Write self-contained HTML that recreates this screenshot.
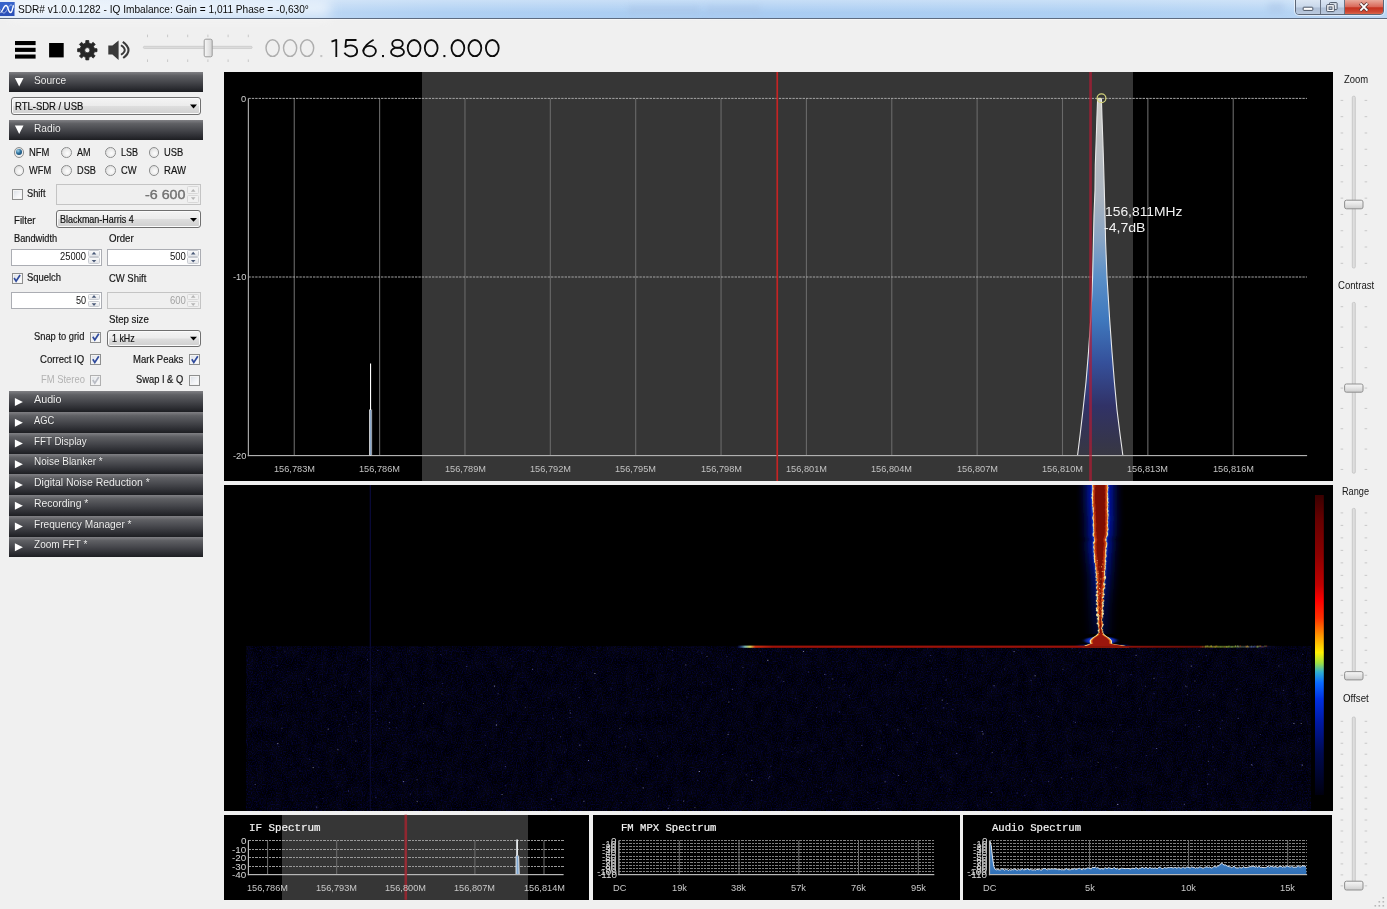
<!DOCTYPE html>
<html><head><meta charset="utf-8"><title>SDR#</title>
<style>
html,body{margin:0;padding:0;}
body{width:1387px;height:909px;overflow:hidden;position:relative;background:#f0f0f0;font-family:"Liberation Sans",sans-serif;}
.t{position:absolute;white-space:pre;transform-origin:0 0;font-family:"Liberation Sans",sans-serif;}
.t.m{font-family:"Liberation Mono",monospace;font-weight:normal;-webkit-text-stroke:0.22px currentColor;}
svg{position:absolute;left:0;top:0;overflow:visible;}
.hdr{position:absolute;left:9px;width:194px;background:linear-gradient(to bottom,#808084 0%,#5f6064 18%,#46474c 50%,#2c2d32 82%,#1d1e22 100%);}
.num{position:absolute;box-sizing:border-box;border:1px solid #abadb3;background:#fff;}
.num.dis{background:#efefef;border-color:#c4c4c4;}
.combo{position:absolute;box-sizing:border-box;border:1px solid #707070;border-radius:3px;background:linear-gradient(to bottom,#f4f4f4 0%,#ececec 48%,#dedede 52%,#cfcfcf 100%);box-shadow:inset 0 0 0 1px #fbfbfb;}
.cb{position:absolute;box-sizing:border-box;border:1px solid #8e8f8f;background:linear-gradient(135deg,#d8dde4 0%,#f4f5f7 60%,#fff 100%);box-shadow:inset 0 0 0 1px #f4f4f4;}
.rb{position:absolute;box-sizing:border-box;border:1px solid #8e8f8f;border-radius:50%;background:radial-gradient(circle at 60% 60%,#fdfdfd 0%,#e9e9e9 55%,#c9c9c9 100%);}

.t.k{-webkit-text-stroke:0.18px currentColor;}

</style></head>
<body>
<div class="" style="position:absolute;left:0.00px;top:0.00px;width:1387.00px;height:18.00px;background:linear-gradient(to right,#dde9f8 0%,#cfe1f6 8%,#bcd7f4 22%,#afd0f3 32%,#a9ccf2 55%,#aed0f3 80%,#bbd7f5 100%);"></div>
<div class="" style="position:absolute;left:0.00px;top:0.00px;width:1387.00px;height:18.00px;background:linear-gradient(to bottom,rgba(255,255,255,.35) 0%,rgba(255,255,255,0) 70%);"></div>
<div class="" style="position:absolute;left:10.00px;top:1.00px;width:320.00px;height:16.00px;background:#fff;filter:blur(6px);opacity:.62;"></div>
<div class="" style="position:absolute;left:0.00px;top:17.60px;width:1387.00px;height:1.20px;background:#5d6b80;"></div>
<div class="" style="position:absolute;left:0.00px;top:18.80px;width:1387.00px;height:1.20px;background:#f7f7f7;"></div>
<svg width="16" height="18" viewBox="0 0 16 18"><rect x="0" y="2" width="14.5" height="14" fill="#2b50b8"/><rect x="0" y="2" width="14.5" height="7" fill="#3f6fd6" opacity=".6"/><path d="M0.5 12.5 C2.5 12.5 3.5 5.5 6 5.5 S 8 12.5 10.5 12.5 S 12 6 14 5.5" stroke="#fff" stroke-width="1.3" fill="none"/><path d="M0.5 9.5 C3 14.5 5 14 7.5 9 S 11.5 3.5 14 8" stroke="#cfe0ff" stroke-width="0.9" fill="none" opacity=".8"/></svg>
<span class="t " style="left:18.30px;top:3.00px;font-size:10.6px;line-height:12px;color:#0a0a0a;transform:scaleX(0.9555);">SDR# v1.0.0.1282 - IQ Imbalance: Gain = 1,011 Phase = -0,630°</span>
<div class="" style="position:absolute;left:628.00px;top:6.00px;width:72.00px;height:8.00px;background:#a9c4e6;filter:blur(3px);opacity:.55;"></div>
<div class="" style="position:absolute;left:706.00px;top:6.00px;width:54.00px;height:8.00px;background:#a9c4e6;filter:blur(3px);opacity:.5;"></div>
<div class="" style="position:absolute;left:1268.00px;top:3.00px;width:16.00px;height:10.00px;background:#a9c4e6;filter:blur(3px);opacity:.5;"></div>
<div style="position:absolute;left:1295px;top:-1px;width:88.5px;height:15.5px;box-sizing:border-box;border:1px solid #5b6676;border-radius:0 0 4px 4px;overflow:hidden;box-shadow:0 0 0 1px rgba(255,255,255,.55);"><div style="position:absolute;left:0;top:0;width:23.5px;height:15px;background:linear-gradient(to bottom,#dbe6f3 0%,#c8d7ea 48%,#aebfd6 52%,#bccbdf 100%);border-right:1px solid #6a7586;"></div><div style="position:absolute;left:24.5px;top:0;width:23.5px;height:15px;background:linear-gradient(to bottom,#dbe6f3 0%,#c8d7ea 48%,#aebfd6 52%,#bccbdf 100%);border-right:1px solid #6a7586;"></div><div style="position:absolute;left:49px;top:0;width:40px;height:15px;background:linear-gradient(to bottom,#e9a99b 0%,#d9695a 45%,#c5321f 52%,#cf4a35 80%,#dd7a5c 100%);"></div></div>
<svg width="1387" height="20" viewBox="0 0 1387 20"><rect x="1303.2" y="7.2" width="9.6" height="3.2" rx=".6" fill="#fff" stroke="#4b5565" stroke-width="1"/><rect x="1329.5" y="2.6" width="7.6" height="7" rx=".8" fill="#dfe7f1" stroke="#4b5565" stroke-width="1"/><rect x="1326.7" y="4.6" width="7.6" height="7" rx=".8" fill="#fff" stroke="#4b5565" stroke-width="1"/><rect x="1329" y="6.9" width="3" height="2.6" fill="#b9c6d8" stroke="#4b5565" stroke-width=".9"/><path d="M1360.2 3.2 L1367.6 10.8 M1367.6 3.2 L1360.2 10.8" stroke="#5a3434" stroke-width="3.4" stroke-linecap="butt"/><path d="M1360.4 3.4 L1367.4 10.6 M1367.4 3.4 L1360.4 10.6" stroke="#fff" stroke-width="1.9" stroke-linecap="butt"/></svg>
<svg width="1387" height="70" viewBox="0 0 1387 70">
<rect x="15" y="41.0" width="20.6" height="4.1" fill="#000"/>
<rect x="15" y="47.8" width="20.6" height="4.1" fill="#000"/>
<rect x="15" y="54.5" width="20.6" height="4.1" fill="#000"/>
<rect x="49.1" y="43" width="14.6" height="14.4" fill="#000"/>
<path d="M94.42 48.61 L96.99 48.74 L96.99 51.66 L94.42 51.79 L93.46 54.11 L95.19 56.02 L93.12 58.09 L91.21 56.36 L88.89 57.32 L88.76 59.89 L85.84 59.89 L85.71 57.32 L83.39 56.36 L81.48 58.09 L79.41 56.02 L81.14 54.11 L80.18 51.79 L77.61 51.66 L77.61 48.74 L80.18 48.61 L81.14 46.29 L79.41 44.38 L81.48 42.31 L83.39 44.04 L85.71 43.08 L85.84 40.51 L88.76 40.51 L88.89 43.08 L91.21 44.04 L93.12 42.31 L95.19 44.38 L93.46 46.29 Z M89.90 50.20 A2.6 2.6 0 1 0 84.70 50.20 A2.6 2.6 0 1 0 89.90 50.20 Z" fill="#262626" fill-rule="evenodd" stroke="#262626" stroke-width="0.8" stroke-linejoin="round"/>
<path d="M108.3 45.6 L112.4 45.6 L118.6 40.4 L118.6 60 L112.4 54.6 L108.3 54.6 Z" fill="#3a3a3a"/>
<path d="M121 45.2 Q128.6 50 121 54.8" stroke="#3a3a3a" stroke-width="1.9" fill="none"/>
<path d="M122.8 41.9 Q134 50 123.2 58" stroke="#3a3a3a" stroke-width="2.1" fill="none"/>
<rect x="143.4" y="46.3" width="108.8" height="2.2" rx="1" fill="#dcdcdc" stroke="#c2c2c2" stroke-width=".6"/>
<rect x="147.0" y="34.6" width="1" height="2.6" fill="#c9c9c9"/>
<rect x="147.0" y="59.4" width="1" height="2.6" fill="#c9c9c9"/>
<rect x="167.1" y="34.6" width="1" height="2.6" fill="#c9c9c9"/>
<rect x="167.1" y="59.4" width="1" height="2.6" fill="#c9c9c9"/>
<rect x="187.2" y="34.6" width="1" height="2.6" fill="#c9c9c9"/>
<rect x="187.2" y="59.4" width="1" height="2.6" fill="#c9c9c9"/>
<rect x="207.4" y="34.6" width="1" height="2.6" fill="#c9c9c9"/>
<rect x="207.4" y="59.4" width="1" height="2.6" fill="#c9c9c9"/>
<rect x="227.6" y="34.6" width="1" height="2.6" fill="#c9c9c9"/>
<rect x="227.6" y="59.4" width="1" height="2.6" fill="#c9c9c9"/>
<rect x="247.8" y="34.6" width="1" height="2.6" fill="#c9c9c9"/>
<rect x="247.8" y="59.4" width="1" height="2.6" fill="#c9c9c9"/>
<defs><linearGradient id="thv" x1="0" x2="0" y1="0" y2="1"><stop offset="0" stop-color="#f7f7f7"/><stop offset=".5" stop-color="#e4e4e4"/><stop offset="1" stop-color="#cdcdcd"/></linearGradient><linearGradient id="thh" x1="0" x2="1" y1="0" y2="0"><stop offset="0" stop-color="#f7f7f7"/><stop offset=".5" stop-color="#e6e6e6"/><stop offset="1" stop-color="#d2d2d2"/></linearGradient></defs>
<rect x="204.2" y="39.2" width="8" height="17.6" rx="1.6" fill="url(#thh)" stroke="#9a9a9a" stroke-width="1"/>
</svg>
<svg width="1387" height="70" viewBox="0 0 1387 70">
<ellipse cx="272.60" cy="48.10" rx="6.58" ry="8.28" stroke="#aeaeae" stroke-width="1.45" fill="none" stroke-linecap="butt" stroke-linejoin="round"/>
<ellipse cx="290.10" cy="48.10" rx="6.58" ry="8.28" stroke="#aeaeae" stroke-width="1.45" fill="none" stroke-linecap="butt" stroke-linejoin="round"/>
<ellipse cx="307.10" cy="48.10" rx="6.58" ry="8.28" stroke="#aeaeae" stroke-width="1.45" fill="none" stroke-linecap="butt" stroke-linejoin="round"/>
<rect x="320.30" y="55.00" width="2.0" height="2.1" fill="#c4c4c4"/>
<path d="M331.50 41.70 L336.30 39.90 L336.30 57.10" stroke="#0c0c0c" stroke-width="1.8" fill="none" stroke-linecap="butt" stroke-linejoin="round"/>
<path d="M356.50 40.00 L346.10 40.00 L345.40 47.10 C348.00 45.40 351.50 45.10 354.10 46.30 C358.10 48.30 358.10 53.70 354.50 55.50 C351.00 57.10 346.10 56.30 344.40 52.70" stroke="#0c0c0c" stroke-width="1.8" fill="none" stroke-linecap="butt" stroke-linejoin="round"/>
<path d="M373.60 39.70 C368.60 42.30 363.60 47.10 363.30 51.30" stroke="#0c0c0c" stroke-width="1.8" fill="none" stroke-linecap="butt" stroke-linejoin="round"/><ellipse cx="369.60" cy="51.10" rx="6.30" ry="5.30" stroke="#0c0c0c" stroke-width="1.8" fill="none" stroke-linecap="butt" stroke-linejoin="round"/>
<rect x="382.00" y="55.00" width="2.0" height="2.1" fill="#0c0c0c"/>
<ellipse cx="397.50" cy="43.80" rx="5.3" ry="4.0" stroke="#0c0c0c" stroke-width="1.8" fill="none" stroke-linecap="butt" stroke-linejoin="round"/><ellipse cx="397.50" cy="52.00" rx="6.5" ry="4.4" stroke="#0c0c0c" stroke-width="1.8" fill="none" stroke-linecap="butt" stroke-linejoin="round"/>
<ellipse cx="414.10" cy="48.10" rx="6.40" ry="8.10" stroke="#0c0c0c" stroke-width="1.8" fill="none" stroke-linecap="butt" stroke-linejoin="round"/>
<ellipse cx="431.20" cy="48.10" rx="6.40" ry="8.10" stroke="#0c0c0c" stroke-width="1.8" fill="none" stroke-linecap="butt" stroke-linejoin="round"/>
<rect x="443.40" y="55.00" width="2.0" height="2.1" fill="#0c0c0c"/>
<ellipse cx="457.90" cy="48.10" rx="6.40" ry="8.10" stroke="#0c0c0c" stroke-width="1.8" fill="none" stroke-linecap="butt" stroke-linejoin="round"/>
<ellipse cx="474.90" cy="48.10" rx="6.40" ry="8.10" stroke="#0c0c0c" stroke-width="1.8" fill="none" stroke-linecap="butt" stroke-linejoin="round"/>
<ellipse cx="492.30" cy="48.10" rx="6.40" ry="8.10" stroke="#0c0c0c" stroke-width="1.8" fill="none" stroke-linecap="butt" stroke-linejoin="round"/>
</svg>
<div class="hdr" style="position:absolute;left:9.00px;top:72.20px;width:194.00px;height:20.20px;"></div>
<svg width="210" height="600"><path d="M14.9 78.00 L23.5 78.00 L19.2 86.40 Z" fill="#fff"/></svg>
<span class="t " style="left:33.70px;top:74.00px;font-size:10.6px;line-height:12px;color:#f2f2f2;transform:scaleX(0.9613);text-shadow:0 0 1px rgba(0,0,0,.6);">Source</span>
<div class="hdr" style="position:absolute;left:9.00px;top:119.80px;width:194.00px;height:20.20px;"></div>
<svg width="210" height="600"><path d="M14.9 125.60 L23.5 125.60 L19.2 134.00 Z" fill="#fff"/></svg>
<span class="t " style="left:33.70px;top:122.00px;font-size:10.6px;line-height:12px;color:#f2f2f2;transform:scaleX(0.9596);text-shadow:0 0 1px rgba(0,0,0,.6);">Radio</span>
<div class="combo" style="position:absolute;left:11.20px;top:97.20px;width:189.70px;height:17.60px;"></div>
<span class="t k" style="left:14.90px;top:101.00px;font-size:10.3px;line-height:11px;color:#101010;transform:scaleX(0.9203);">RTL-SDR / USB</span>
<svg width="210" height="600"><path d="M190.00 104.60 L197.00 104.60 L193.50 108.40 Z" fill="#000"/></svg>
<div class="rb" style="position:absolute;left:13.50px;top:146.90px;width:10.80px;height:10.80px;"></div>
<div class="" style="position:absolute;left:16.00px;top:149.40px;width:5.80px;height:5.80px;border-radius:50%;background:radial-gradient(circle at 35% 30%,#9fd3ea 0%,#2b6f9c 45%,#123a5e 100%);"></div>
<span class="t k" style="left:28.80px;top:147.00px;font-size:10.2px;line-height:11px;color:#151515;transform:scaleX(0.9238);">NFM</span>
<div class="rb" style="position:absolute;left:60.90px;top:146.90px;width:10.80px;height:10.80px;"></div>
<span class="t k" style="left:76.50px;top:147.00px;font-size:10.2px;line-height:11px;color:#151515;transform:scaleX(0.8889);">AM</span>
<div class="rb" style="position:absolute;left:105.10px;top:146.90px;width:10.80px;height:10.80px;"></div>
<span class="t k" style="left:120.70px;top:147.00px;font-size:10.2px;line-height:11px;color:#151515;transform:scaleX(0.8870);">LSB</span>
<div class="rb" style="position:absolute;left:148.70px;top:146.90px;width:10.80px;height:10.80px;"></div>
<span class="t k" style="left:164.00px;top:147.00px;font-size:10.2px;line-height:11px;color:#151515;transform:scaleX(0.9160);">USB</span>
<div class="rb" style="position:absolute;left:13.50px;top:164.80px;width:10.80px;height:10.80px;"></div>
<span class="t k" style="left:28.80px;top:165.00px;font-size:10.2px;line-height:11px;color:#151515;transform:scaleX(0.9107);">WFM</span>
<div class="rb" style="position:absolute;left:60.90px;top:164.80px;width:10.80px;height:10.80px;"></div>
<span class="t k" style="left:76.50px;top:165.00px;font-size:10.2px;line-height:11px;color:#151515;transform:scaleX(0.9017);">DSB</span>
<div class="rb" style="position:absolute;left:105.10px;top:164.80px;width:10.80px;height:10.80px;"></div>
<span class="t k" style="left:120.70px;top:165.00px;font-size:10.2px;line-height:11px;color:#151515;transform:scaleX(0.9186);">CW</span>
<div class="rb" style="position:absolute;left:148.70px;top:164.80px;width:10.80px;height:10.80px;"></div>
<span class="t k" style="left:164.00px;top:165.00px;font-size:10.2px;line-height:11px;color:#151515;transform:scaleX(0.9355);">RAW</span>
<div class="cb" style="position:absolute;left:11.50px;top:188.60px;width:11.00px;height:11.00px;"></div>
<span class="t k" style="left:26.50px;top:188.00px;font-size:10.3px;line-height:11px;color:#151515;transform:scaleX(0.8981);">Shift</span>
<div class="num dis" style="position:absolute;left:56.00px;top:184.20px;width:144.90px;height:20.40px;"></div>
<div class="" style="position:absolute;left:187.30px;top:185.80px;width:11.80px;height:8.40px;box-sizing:border-box;border:1px solid #d8d8d8;border-radius:1.5px;background:#f1f1f1;"></div>
<div class="" style="position:absolute;left:187.30px;top:194.60px;width:11.80px;height:8.40px;box-sizing:border-box;border:1px solid #d8d8d8;border-radius:1.5px;background:#f1f1f1;"></div>
<svg width="210" height="600"><path d="M190.90 191.80 L195.50 191.80 L193.20 189.10 Z" fill="#b5b5b5"/><path d="M190.90 197.30 L195.50 197.30 L193.20 200.00 Z" fill="#b5b5b5"/></svg>
<span class="t " style="left:145.00px;top:188.00px;font-size:12.6px;line-height:14px;color:#707070;transform:scaleX(1.1338);-webkit-text-stroke:0.35px #707070;">-6 600</span>
<span class="t k" style="left:13.60px;top:215.00px;font-size:10.3px;line-height:11px;color:#151515;transform:scaleX(0.9403);">Filter</span>
<div class="combo" style="position:absolute;left:56.30px;top:210.30px;width:144.60px;height:18.20px;"></div>
<span class="t k" style="left:60.30px;top:214.00px;font-size:10.3px;line-height:11px;color:#101010;transform:scaleX(0.8700);">Blackman-Harris 4</span>
<svg width="210" height="600"><path d="M190.00 218.00 L197.00 218.00 L193.50 221.80 Z" fill="#000"/></svg>
<span class="t k" style="left:13.60px;top:233.00px;font-size:10.3px;line-height:11px;color:#151515;transform:scaleX(0.8981);">Bandwidth</span>
<span class="t k" style="left:109.30px;top:233.00px;font-size:10.3px;line-height:11px;color:#151515;transform:scaleX(0.9386);">Order</span>
<div class="num" style="position:absolute;left:11.40px;top:248.50px;width:90.30px;height:17.00px;"></div>
<div class="" style="position:absolute;left:88.10px;top:250.10px;width:11.80px;height:6.70px;box-sizing:border-box;border:1px solid #c9ccd2;border-radius:1.5px;background:linear-gradient(to bottom,#fafafa,#e4e6ea);"></div>
<div class="" style="position:absolute;left:88.10px;top:257.20px;width:11.80px;height:6.70px;box-sizing:border-box;border:1px solid #c9ccd2;border-radius:1.5px;background:linear-gradient(to bottom,#fafafa,#e4e6ea);"></div>
<svg width="210" height="600"><path d="M91.70 254.40 L96.30 254.40 L94.00 251.70 Z" fill="#4a5a78"/><path d="M91.70 259.90 L96.30 259.90 L94.00 262.60 Z" fill="#4a5a78"/></svg>
<span class="t " style="left:60.30px;top:251.00px;font-size:10.3px;line-height:11px;color:#101010;transform:scaleX(0.9080);">25000</span>
<div class="num" style="position:absolute;left:107.20px;top:248.50px;width:93.70px;height:17.00px;"></div>
<div class="" style="position:absolute;left:187.30px;top:250.10px;width:11.80px;height:6.70px;box-sizing:border-box;border:1px solid #c9ccd2;border-radius:1.5px;background:linear-gradient(to bottom,#fafafa,#e4e6ea);"></div>
<div class="" style="position:absolute;left:187.30px;top:257.20px;width:11.80px;height:6.70px;box-sizing:border-box;border:1px solid #c9ccd2;border-radius:1.5px;background:linear-gradient(to bottom,#fafafa,#e4e6ea);"></div>
<svg width="210" height="600"><path d="M190.90 254.40 L195.50 254.40 L193.20 251.70 Z" fill="#4a5a78"/><path d="M190.90 259.90 L195.50 259.90 L193.20 262.60 Z" fill="#4a5a78"/></svg>
<span class="t " style="left:169.60px;top:251.00px;font-size:10.3px;line-height:11px;color:#101010;transform:scaleX(0.9244);">500</span>
<div class="cb" style="position:absolute;left:11.50px;top:272.80px;width:11.00px;height:11.00px;"></div>
<svg width="210" height="600"><path d="M14.10 278.00 L16.10 281.20 L20.10 275.00" stroke="#2f4a9c" stroke-width="1.7" fill="none" stroke-linejoin="miter"/></svg>
<span class="t k" style="left:26.50px;top:272.00px;font-size:10.3px;line-height:11px;color:#151515;transform:scaleX(0.9158);">Squelch</span>
<span class="t k" style="left:109.30px;top:273.00px;font-size:10.3px;line-height:11px;color:#151515;transform:scaleX(0.9180);">CW Shift</span>
<div class="num" style="position:absolute;left:11.40px;top:292.20px;width:90.30px;height:16.40px;"></div>
<div class="" style="position:absolute;left:88.10px;top:293.80px;width:11.80px;height:6.40px;box-sizing:border-box;border:1px solid #c9ccd2;border-radius:1.5px;background:linear-gradient(to bottom,#fafafa,#e4e6ea);"></div>
<div class="" style="position:absolute;left:88.10px;top:300.60px;width:11.80px;height:6.40px;box-sizing:border-box;border:1px solid #c9ccd2;border-radius:1.5px;background:linear-gradient(to bottom,#fafafa,#e4e6ea);"></div>
<svg width="210" height="600"><path d="M91.70 297.80 L96.30 297.80 L94.00 295.10 Z" fill="#4a5a78"/><path d="M91.70 303.30 L96.30 303.30 L94.00 306.00 Z" fill="#4a5a78"/></svg>
<span class="t " style="left:76.20px;top:295.00px;font-size:10.3px;line-height:11px;color:#101010;transform:scaleX(0.8834);">50</span>
<div class="num dis" style="position:absolute;left:107.20px;top:292.20px;width:93.70px;height:16.40px;"></div>
<div class="" style="position:absolute;left:187.30px;top:293.80px;width:11.80px;height:6.40px;box-sizing:border-box;border:1px solid #d8d8d8;border-radius:1.5px;background:#f1f1f1;"></div>
<div class="" style="position:absolute;left:187.30px;top:300.60px;width:11.80px;height:6.40px;box-sizing:border-box;border:1px solid #d8d8d8;border-radius:1.5px;background:#f1f1f1;"></div>
<svg width="210" height="600"><path d="M190.90 297.80 L195.50 297.80 L193.20 295.10 Z" fill="#b5b5b5"/><path d="M190.90 303.30 L195.50 303.30 L193.20 306.00 Z" fill="#b5b5b5"/></svg>
<span class="t " style="left:169.60px;top:295.00px;font-size:10.3px;line-height:11px;color:#a3a3a3;transform:scaleX(0.9244);">600</span>
<span class="t k" style="left:109.30px;top:314.00px;font-size:10.3px;line-height:11px;color:#151515;transform:scaleX(0.9390);">Step size</span>
<span class="t k" style="left:34.10px;top:331.00px;font-size:10.3px;line-height:11px;color:#151515;transform:scaleX(0.9070);">Snap to grid</span>
<div class="cb" style="position:absolute;left:90.20px;top:331.60px;width:11.00px;height:11.00px;"></div>
<svg width="210" height="600"><path d="M92.80 336.80 L94.80 340.00 L98.80 333.80" stroke="#2f4a9c" stroke-width="1.7" fill="none" stroke-linejoin="miter"/></svg>
<div class="combo" style="position:absolute;left:107.20px;top:329.60px;width:93.70px;height:17.00px;"></div>
<span class="t k" style="left:111.70px;top:333.00px;font-size:10.3px;line-height:11px;color:#101010;transform:scaleX(0.8626);">1 kHz</span>
<svg width="210" height="600"><path d="M190.00 336.70 L197.00 336.70 L193.50 340.50 Z" fill="#000"/></svg>
<span class="t k" style="left:40.10px;top:354.00px;font-size:10.3px;line-height:11px;color:#151515;transform:scaleX(0.9309);">Correct IQ</span>
<div class="cb" style="position:absolute;left:90.20px;top:354.00px;width:11.00px;height:11.00px;"></div>
<svg width="210" height="600"><path d="M92.80 359.20 L94.80 362.40 L98.80 356.20" stroke="#2f4a9c" stroke-width="1.7" fill="none" stroke-linejoin="miter"/></svg>
<span class="t k" style="left:132.90px;top:354.00px;font-size:10.3px;line-height:11px;color:#151515;transform:scaleX(0.9249);">Mark Peaks</span>
<div class="cb" style="position:absolute;left:189.20px;top:354.00px;width:11.00px;height:11.00px;"></div>
<svg width="210" height="600"><path d="M191.80 359.20 L193.80 362.40 L197.80 356.20" stroke="#2f4a9c" stroke-width="1.7" fill="none" stroke-linejoin="miter"/></svg>
<span class="t " style="left:40.90px;top:374.00px;font-size:10.3px;line-height:11px;color:#b2b2b2;transform:scaleX(0.9127);">FM Stereo</span>
<div class="cb" style="position:absolute;left:90.20px;top:374.80px;width:11.00px;height:11.00px;opacity:.65;"></div>
<svg width="210" height="600"><path d="M92.80 380.00 L94.80 383.20 L98.80 377.00" stroke="#b9bcc4" stroke-width="1.7" fill="none" stroke-linejoin="miter"/></svg>
<span class="t k" style="left:136.30px;top:374.00px;font-size:10.3px;line-height:11px;color:#151515;transform:scaleX(0.9056);">Swap I &amp; Q</span>
<div class="cb" style="position:absolute;left:189.20px;top:374.80px;width:11.00px;height:11.00px;"></div>
<div class="hdr" style="position:absolute;left:9.00px;top:391.30px;width:194.00px;height:20.75px;"></div>
<svg width="210" height="600"><path d="M14.9 397.90 L22.9 401.90 L14.9 405.90 Z" fill="#fff"/></svg>
<span class="t " style="left:33.70px;top:393.00px;font-size:10.6px;line-height:12px;color:#f2f2f2;transform:scaleX(1.0134);text-shadow:0 0 1px rgba(0,0,0,.6);">Audio</span>
<div class="hdr" style="position:absolute;left:9.00px;top:412.05px;width:194.00px;height:20.75px;"></div>
<svg width="210" height="600"><path d="M14.9 418.65 L22.9 422.65 L14.9 426.65 Z" fill="#fff"/></svg>
<span class="t " style="left:33.70px;top:414.00px;font-size:10.6px;line-height:12px;color:#f2f2f2;transform:scaleX(0.8802);text-shadow:0 0 1px rgba(0,0,0,.6);">AGC</span>
<div class="hdr" style="position:absolute;left:9.00px;top:432.80px;width:194.00px;height:20.75px;"></div>
<svg width="210" height="600"><path d="M14.9 439.40 L22.9 443.40 L14.9 447.40 Z" fill="#fff"/></svg>
<span class="t " style="left:33.70px;top:435.00px;font-size:10.6px;line-height:12px;color:#f2f2f2;transform:scaleX(0.9258);text-shadow:0 0 1px rgba(0,0,0,.6);">FFT Display</span>
<div class="hdr" style="position:absolute;left:9.00px;top:453.55px;width:194.00px;height:20.75px;"></div>
<svg width="210" height="600"><path d="M14.9 460.15 L22.9 464.15 L14.9 468.15 Z" fill="#fff"/></svg>
<span class="t " style="left:33.70px;top:455.00px;font-size:10.6px;line-height:12px;color:#f2f2f2;transform:scaleX(0.9407);text-shadow:0 0 1px rgba(0,0,0,.6);">Noise Blanker *</span>
<div class="hdr" style="position:absolute;left:9.00px;top:474.30px;width:194.00px;height:20.75px;"></div>
<svg width="210" height="600"><path d="M14.9 480.90 L22.9 484.90 L14.9 488.90 Z" fill="#fff"/></svg>
<span class="t " style="left:33.70px;top:476.00px;font-size:10.6px;line-height:12px;color:#f2f2f2;transform:scaleX(0.9878);text-shadow:0 0 1px rgba(0,0,0,.6);">Digital Noise Reduction *</span>
<div class="hdr" style="position:absolute;left:9.00px;top:495.05px;width:194.00px;height:20.75px;"></div>
<svg width="210" height="600"><path d="M14.9 501.65 L22.9 505.65 L14.9 509.65 Z" fill="#fff"/></svg>
<span class="t " style="left:33.70px;top:497.00px;font-size:10.6px;line-height:12px;color:#f2f2f2;transform:scaleX(0.9822);text-shadow:0 0 1px rgba(0,0,0,.6);">Recording *</span>
<div class="hdr" style="position:absolute;left:9.00px;top:515.80px;width:194.00px;height:20.75px;"></div>
<svg width="210" height="600"><path d="M14.9 522.40 L22.9 526.40 L14.9 530.40 Z" fill="#fff"/></svg>
<span class="t " style="left:33.70px;top:518.00px;font-size:10.6px;line-height:12px;color:#f2f2f2;transform:scaleX(0.9576);text-shadow:0 0 1px rgba(0,0,0,.6);">Frequency Manager *</span>
<div class="hdr" style="position:absolute;left:9.00px;top:536.55px;width:194.00px;height:20.75px;"></div>
<svg width="210" height="600"><path d="M14.9 543.15 L22.9 547.15 L14.9 551.15 Z" fill="#fff"/></svg>
<span class="t " style="left:33.70px;top:538.00px;font-size:10.6px;line-height:12px;color:#f2f2f2;transform:scaleX(0.9478);text-shadow:0 0 1px rgba(0,0,0,.6);">Zoom FFT *</span>
<div class="" style="position:absolute;left:224.20px;top:72.00px;width:1108.60px;height:409.00px;background:#000;"></div>
<div class="" style="position:absolute;left:422.00px;top:72.00px;width:711.00px;height:409.00px;background:#363636;"></div>
<svg width="1387" height="909" viewBox="0 0 1387 909">
<defs><linearGradient id="pk" gradientUnits="userSpaceOnUse" x1="0" y1="98" x2="0" y2="456"><stop offset="0" stop-color="#cfcfca"/><stop offset=".12" stop-color="#bcbfc1"/><stop offset=".28" stop-color="#a9b3bf"/><stop offset=".4" stop-color="#86a3c4"/><stop offset=".5" stop-color="#5a8fc8"/><stop offset=".62" stop-color="#3f78bd"/><stop offset=".74" stop-color="#35509a"/><stop offset=".86" stop-color="#313267"/><stop offset=".95" stop-color="#35354e"/><stop offset="1" stop-color="#383842"/></linearGradient></defs>
<rect x="293.70" y="98.4" width="1.1" height="357" fill="#696969"/>
<rect x="379.06" y="98.4" width="1.1" height="357" fill="#696969"/>
<rect x="464.42" y="98.4" width="1.1" height="357" fill="#696969"/>
<rect x="549.78" y="98.4" width="1.1" height="357" fill="#696969"/>
<rect x="635.14" y="98.4" width="1.1" height="357" fill="#696969"/>
<rect x="720.50" y="98.4" width="1.1" height="357" fill="#696969"/>
<rect x="805.86" y="98.4" width="1.1" height="357" fill="#696969"/>
<rect x="891.22" y="98.4" width="1.1" height="357" fill="#696969"/>
<rect x="976.58" y="98.4" width="1.1" height="357" fill="#696969"/>
<rect x="1061.94" y="98.4" width="1.1" height="357" fill="#696969"/>
<rect x="1147.30" y="98.4" width="1.1" height="357" fill="#696969"/>
<rect x="1232.66" y="98.4" width="1.1" height="357" fill="#696969"/>
<line x1="248.4" y1="98.4" x2="1307" y2="98.4" stroke="#a4a4a4" stroke-width="1" stroke-dasharray="2.4 1"/>
<line x1="248.4" y1="277.0" x2="1307" y2="277.0" stroke="#a4a4a4" stroke-width="1" stroke-dasharray="2.4 1"/>
<rect x="247.8" y="98.4" width="1.15" height="357.8" fill="#acacac"/>
<rect x="247.8" y="455.0" width="1059.3" height="1.15" fill="#b0b0b0"/>
<rect x="776.4" y="72.0" width="1.7" height="409.0" fill="#c42424"/>
<path d="M1077.6 455.0 L1080.2 434.0 L1083.0 410.0 L1086.0 382.0 L1088.5 352.0 L1090.7 320.0 L1092.6 277.0 L1093.4 242.0 L1094.0 215.0 L1095.0 190.0 L1095.3 165.0 L1096.2 140.0 L1096.9 118.0 L1097.6 98.4 L1097.6 98.4 L1101.4 98.4 L1101.4 98.4 L1102.0 118.0 L1102.8 140.0 L1103.6 165.0 L1104.3 190.0 L1105.0 215.0 L1105.6 242.0 L1107.0 277.0 L1109.7 320.0 L1112.0 352.0 L1114.4 382.0 L1117.0 410.0 L1120.0 434.0 L1122.8 455.0 Z" fill="url(#pk)" transform="translate(0,0)"/>
<path d="M1077.6 455.0 L1080.2 434.0 L1083.0 410.0 L1086.0 382.0 L1088.5 352.0 L1090.7 320.0 L1092.6 277.0 L1093.4 242.0 L1094.0 215.0 L1095.0 190.0 L1095.3 165.0 L1096.2 140.0 L1096.9 118.0 L1097.6 98.4" stroke="#e9e9e9" stroke-width="1.1" fill="none" transform="scale(1) translate(0,0)"/>
<path d="M1097.6 98.4 L1101.4 98.4" stroke="#e8e8a8" stroke-width="1.2"/>
<path d="M1101.4 98.4 L1102.0 118.0 L1102.8 140.0 L1103.6 165.0 L1104.3 190.0 L1105.0 215.0 L1105.6 242.0 L1107.0 277.0 L1109.7 320.0 L1112.0 352.0 L1114.4 382.0 L1117.0 410.0 L1120.0 434.0 L1122.8 455.0" stroke="#e9e9e9" stroke-width="1.1" fill="none"/>
<rect x="1089.2" y="72.0" width="2.7" height="409.0" fill="#b01c34" opacity=".72"/>
<circle cx="1101.5" cy="98.2" r="4.4" stroke="#d2d27a" stroke-width="1.2" fill="none"/>
<rect x="370.0" y="363.5" width="1.1" height="92" fill="#fff"/>
<rect x="369.0" y="409.5" width="0.9" height="46" fill="#e0e0e0"/>
<rect x="371.3" y="409.5" width="0.8" height="46" fill="#d0d0d0"/>
<rect x="369.9" y="410" width="1.4" height="45" fill="#8aa8cc"/>
</svg>
<span class="t " style="left:273.80px;top:464.00px;font-size:9.3px;line-height:10px;color:#c2c2c2;transform:scaleX(0.9907);">156,783M</span>
<span class="t " style="left:359.16px;top:464.00px;font-size:9.3px;line-height:10px;color:#c2c2c2;transform:scaleX(0.9907);">156,786M</span>
<span class="t " style="left:444.52px;top:464.00px;font-size:9.3px;line-height:10px;color:#c2c2c2;transform:scaleX(0.9907);">156,789M</span>
<span class="t " style="left:529.88px;top:464.00px;font-size:9.3px;line-height:10px;color:#c2c2c2;transform:scaleX(0.9907);">156,792M</span>
<span class="t " style="left:615.24px;top:464.00px;font-size:9.3px;line-height:10px;color:#c2c2c2;transform:scaleX(0.9907);">156,795M</span>
<span class="t " style="left:700.60px;top:464.00px;font-size:9.3px;line-height:10px;color:#c2c2c2;transform:scaleX(0.9907);">156,798M</span>
<span class="t " style="left:785.96px;top:464.00px;font-size:9.3px;line-height:10px;color:#c2c2c2;transform:scaleX(0.9907);">156,801M</span>
<span class="t " style="left:871.32px;top:464.00px;font-size:9.3px;line-height:10px;color:#c2c2c2;transform:scaleX(0.9907);">156,804M</span>
<span class="t " style="left:956.68px;top:464.00px;font-size:9.3px;line-height:10px;color:#c2c2c2;transform:scaleX(0.9907);">156,807M</span>
<span class="t " style="left:1042.04px;top:464.00px;font-size:9.3px;line-height:10px;color:#c2c2c2;transform:scaleX(0.9907);">156,810M</span>
<span class="t " style="left:1127.40px;top:464.00px;font-size:9.3px;line-height:10px;color:#c2c2c2;transform:scaleX(0.9907);">156,813M</span>
<span class="t " style="left:1212.76px;top:464.00px;font-size:9.3px;line-height:10px;color:#c2c2c2;transform:scaleX(0.9907);">156,816M</span>
<span class="t " style="left:241.14px;top:94.00px;font-size:9.3px;line-height:10px;color:#d0d0d0;transform:scaleX(0.9980);">0</span>
<span class="t " style="left:232.86px;top:272.00px;font-size:9.3px;line-height:10px;color:#d0d0d0;transform:scaleX(0.9980);">-10</span>
<span class="t " style="left:232.86px;top:451.00px;font-size:9.3px;line-height:10px;color:#d0d0d0;transform:scaleX(0.9980);">-20</span>
<span class="t " style="left:1105.20px;top:204.00px;font-size:13.1px;line-height:15px;color:#f4f4f4;transform:scaleX(1.0574);">156,811MHz</span>
<span class="t " style="left:1103.60px;top:220.00px;font-size:13.1px;line-height:15px;color:#f4f4f4;transform:scaleX(1.0757);">-4,7dB</span>
<div class="" style="position:absolute;left:224.20px;top:485.00px;width:1108.60px;height:325.60px;background:#000;overflow:hidden;"></div>
<svg width="1387" height="909" viewBox="0 0 1387 909">
<defs><filter id="b3" x="-50%" y="-5%" width="200%" height="110%"><feGaussianBlur stdDeviation="2.2 0.6"/></filter><filter id="b4" x="-80%" y="-5%" width="260%" height="110%"><feGaussianBlur stdDeviation="3.6 0.6"/></filter><filter id="b1" x="-50%" y="-5%" width="200%" height="110%"><feGaussianBlur stdDeviation="0.7 0.4"/></filter><filter id="b05" x="-20%" y="-5%" width="140%" height="110%"><feGaussianBlur stdDeviation="0.45"/></filter><filter id="nz" x="0" y="0" width="100%" height="100%" color-interpolation-filters="sRGB"><feTurbulence type="fractalNoise" baseFrequency="0.11 0.07" numOctaves="3" seed="11" result="n"/><feColorMatrix type="matrix" values="0.03 0 0 0 -0.008  0.03 0 0 0 -0.008  0.07 0.02 0 0 -0.026  0 0 0 0 1"/></filter><filter id="nz2" x="0" y="0" width="100%" height="100%" color-interpolation-filters="sRGB"><feTurbulence type="fractalNoise" baseFrequency="0.8 0.7" numOctaves="1" seed="5"/><feColorMatrix type="matrix" values="0.06 0 0 0 -0.034  0.06 0 0 0 -0.034  0.55 0 0 0 -0.222  0 0 0 0 1"/></filter><linearGradient id="cbar" x1="0" x2="0" y1="0" y2="1"><stop offset="0" stop-color="#3a0000"/><stop offset=".08" stop-color="#650000"/><stop offset=".2" stop-color="#8c0000"/><stop offset=".3" stop-color="#c00000"/><stop offset=".352" stop-color="#ff0000"/><stop offset=".41" stop-color="#ff3000"/><stop offset=".47" stop-color="#ff9800"/><stop offset=".525" stop-color="#fff000"/><stop offset=".56" stop-color="#a0e040"/><stop offset=".59" stop-color="#30b0d0"/><stop offset=".625" stop-color="#0a6cff"/><stop offset=".68" stop-color="#0030e0"/><stop offset=".76" stop-color="#0018a0"/><stop offset=".86" stop-color="#000a50"/><stop offset="1" stop-color="#000010"/></linearGradient><clipPath id="wfclip"><rect x="224.2" y="485" width="1108.6" height="325.6"/></clipPath></defs>
<g clip-path="url(#wfclip)">
<rect x="246.6" y="646.2" width="1063.6" height="164.4" fill="#020216"/>
<rect x="246.6" y="646.2" width="1063.6" height="164.4" filter="url(#nz)"/>
<rect x="246.6" y="646.2" width="1063.6" height="164.4" filter="url(#nz2)" style="mix-blend-mode:screen"/>
<rect x="591.3" y="672.3" width="1.2" height="1" fill="#3a3a8c" opacity="0.34"/><rect x="816.0" y="706.9" width="1.2" height="1" fill="#3a3a8c" opacity="0.75"/><rect x="475.6" y="661.8" width="1.2" height="1" fill="#2c2c78" opacity="0.33"/><rect x="344.2" y="716.3" width="1.2" height="1" fill="#2c2c78" opacity="0.77"/><rect x="916.5" y="741.9" width="1.2" height="1" fill="#3a3a8c" opacity="0.59"/><rect x="668.5" y="805.2" width="1.2" height="1" fill="#3a3a8c" opacity="0.58"/><rect x="389.2" y="715.5" width="1.2" height="1" fill="#2c2c78" opacity="0.59"/><rect x="841.9" y="757.8" width="1.2" height="1" fill="#2c2c78" opacity="0.59"/><rect x="925.2" y="708.0" width="1.2" height="1" fill="#2c2c78" opacity="0.58"/><rect x="904.2" y="727.9" width="1.2" height="1" fill="#2c2c78" opacity="0.69"/><rect x="741.5" y="796.7" width="1.2" height="1" fill="#23236a" opacity="0.45"/><rect x="1090.0" y="760.5" width="1.2" height="1" fill="#6868b0" opacity="0.34"/><rect x="566.3" y="727.7" width="1.2" height="1" fill="#23236a" opacity="0.66"/><rect x="553.2" y="805.8" width="1.2" height="1" fill="#2c2c78" opacity="0.56"/><rect x="422.9" y="703.1" width="1.2" height="1" fill="#a8a8d8" opacity="0.51"/><rect x="1267.7" y="660.5" width="1.2" height="1" fill="#23236a" opacity="0.47"/><rect x="619.2" y="728.0" width="1.2" height="1" fill="#a8a8d8" opacity="0.33"/><rect x="347.2" y="691.5" width="1.2" height="1" fill="#2c2c78" opacity="0.33"/><rect x="991.6" y="752.2" width="1.2" height="1" fill="#a8a8d8" opacity="0.44"/><rect x="656.9" y="755.7" width="1.2" height="1" fill="#3a3a8c" opacity="0.77"/><rect x="624.8" y="746.4" width="1.2" height="1" fill="#a8a8d8" opacity="0.33"/><rect x="1062.3" y="668.8" width="1.2" height="1" fill="#6868b0" opacity="0.50"/><rect x="1219.8" y="727.9" width="1.2" height="1" fill="#4a4a98" opacity="0.52"/><rect x="830.4" y="790.2" width="1.2" height="1" fill="#2c2c78" opacity="0.73"/><rect x="543.1" y="714.9" width="1.2" height="1" fill="#23236a" opacity="0.64"/><rect x="651.3" y="685.2" width="1.2" height="1" fill="#2c2c78" opacity="0.39"/><rect x="493.9" y="685.6" width="1.2" height="1" fill="#a8a8d8" opacity="0.72"/><rect x="441.3" y="693.4" width="1.2" height="1" fill="#4a4a98" opacity="0.51"/><rect x="639.4" y="739.2" width="1.2" height="1" fill="#4a4a98" opacity="0.65"/><rect x="794.4" y="747.4" width="1.2" height="1" fill="#3a3a8c" opacity="0.53"/><rect x="1171.2" y="801.3" width="1.2" height="1" fill="#2c2c78" opacity="0.50"/><rect x="665.8" y="725.5" width="1.2" height="1" fill="#2c2c78" opacity="0.33"/><rect x="319.4" y="681.6" width="1.2" height="1" fill="#4a4a98" opacity="0.35"/><rect x="884.8" y="664.5" width="1.2" height="1" fill="#4a4a98" opacity="0.57"/><rect x="1253.9" y="746.8" width="1.2" height="1" fill="#2c2c78" opacity="0.74"/><rect x="898.9" y="671.9" width="1.2" height="1" fill="#23236a" opacity="0.78"/><rect x="886.4" y="724.3" width="1.2" height="1" fill="#2c2c78" opacity="0.72"/><rect x="1300.7" y="723.0" width="1.2" height="1" fill="#a8a8d8" opacity="0.46"/><rect x="400.8" y="768.7" width="1.2" height="1" fill="#23236a" opacity="0.54"/><rect x="981.6" y="731.1" width="1.2" height="1" fill="#6868b0" opacity="0.78"/><rect x="808.0" y="671.6" width="1.2" height="1" fill="#3a3a8c" opacity="0.68"/><rect x="564.0" y="751.5" width="1.2" height="1" fill="#2c2c78" opacity="0.65"/><rect x="524.8" y="707.0" width="1.2" height="1" fill="#4a4a98" opacity="0.48"/><rect x="484.2" y="735.2" width="1.2" height="1" fill="#23236a" opacity="0.62"/><rect x="898.0" y="774.9" width="1.2" height="1" fill="#6868b0" opacity="0.70"/><rect x="1115.4" y="767.1" width="1.2" height="1" fill="#6868b0" opacity="0.40"/><rect x="770.3" y="765.7" width="1.2" height="1" fill="#3a3a8c" opacity="0.70"/><rect x="748.6" y="679.2" width="1.2" height="1" fill="#23236a" opacity="0.52"/><rect x="1241.2" y="807.1" width="1.2" height="1" fill="#23236a" opacity="0.34"/><rect x="356.3" y="723.7" width="1.2" height="1" fill="#23236a" opacity="0.40"/><rect x="909.5" y="792.9" width="1.2" height="1" fill="#3a3a8c" opacity="0.54"/><rect x="940.2" y="776.7" width="1.2" height="1" fill="#2c2c78" opacity="0.72"/><rect x="375.1" y="710.6" width="1.2" height="1" fill="#6868b0" opacity="0.54"/><rect x="437.2" y="775.1" width="1.2" height="1" fill="#23236a" opacity="0.34"/><rect x="1250.9" y="764.2" width="1.2" height="1" fill="#a8a8d8" opacity="0.50"/><rect x="1251.6" y="764.7" width="1.2" height="1" fill="#4a4a98" opacity="0.80"/><rect x="277.2" y="743.1" width="1.2" height="1" fill="#a8a8d8" opacity="0.70"/><rect x="402.9" y="781.1" width="1.2" height="1" fill="#a8a8d8" opacity="0.63"/><rect x="619.4" y="736.3" width="1.2" height="1" fill="#4a4a98" opacity="0.31"/><rect x="1095.3" y="764.9" width="1.2" height="1" fill="#2c2c78" opacity="0.56"/><rect x="1237.6" y="717.8" width="1.2" height="1" fill="#6868b0" opacity="0.71"/><rect x="471.7" y="688.5" width="1.2" height="1" fill="#23236a" opacity="0.55"/><rect x="1057.5" y="700.5" width="1.2" height="1" fill="#2c2c78" opacity="0.72"/><rect x="312.6" y="767.1" width="1.2" height="1" fill="#a8a8d8" opacity="0.63"/><rect x="1111.9" y="731.2" width="1.2" height="1" fill="#4a4a98" opacity="0.57"/><rect x="802.9" y="651.0" width="1.2" height="1" fill="#a8a8d8" opacity="0.69"/><rect x="893.1" y="772.9" width="1.2" height="1" fill="#4a4a98" opacity="0.39"/><rect x="749.9" y="764.8" width="1.2" height="1" fill="#3a3a8c" opacity="0.46"/><rect x="797.4" y="737.4" width="1.2" height="1" fill="#2c2c78" opacity="0.74"/><rect x="308.2" y="678.8" width="1.2" height="1" fill="#3a3a8c" opacity="0.69"/><rect x="786.2" y="738.4" width="1.2" height="1" fill="#2c2c78" opacity="0.52"/><rect x="897.3" y="729.4" width="1.2" height="1" fill="#6868b0" opacity="0.65"/><rect x="727.5" y="733.9" width="1.2" height="1" fill="#a8a8d8" opacity="0.55"/><rect x="510.5" y="732.2" width="1.2" height="1" fill="#23236a" opacity="0.76"/><rect x="1194.3" y="680.6" width="1.2" height="1" fill="#a8a8d8" opacity="0.37"/><rect x="376.9" y="719.2" width="1.2" height="1" fill="#2c2c78" opacity="0.64"/><rect x="702.0" y="682.2" width="1.2" height="1" fill="#23236a" opacity="0.69"/><rect x="1198.8" y="672.9" width="1.2" height="1" fill="#23236a" opacity="0.37"/><rect x="1183.8" y="803.8" width="1.2" height="1" fill="#6868b0" opacity="0.67"/><rect x="347.8" y="790.5" width="1.2" height="1" fill="#4a4a98" opacity="0.79"/><rect x="1130.4" y="674.0" width="1.2" height="1" fill="#2c2c78" opacity="0.80"/><rect x="676.0" y="715.8" width="1.2" height="1" fill="#23236a" opacity="0.46"/><rect x="1013.5" y="651.1" width="1.2" height="1" fill="#a8a8d8" opacity="0.52"/><rect x="267.2" y="701.4" width="1.2" height="1" fill="#23236a" opacity="0.56"/><rect x="316.1" y="806.6" width="1.2" height="1" fill="#6868b0" opacity="0.79"/><rect x="359.1" y="690.8" width="1.2" height="1" fill="#3a3a8c" opacity="0.75"/><rect x="440.4" y="769.7" width="1.2" height="1" fill="#2c2c78" opacity="0.72"/><rect x="964.5" y="800.3" width="1.2" height="1" fill="#2c2c78" opacity="0.37"/><rect x="1222.3" y="739.9" width="1.2" height="1" fill="#23236a" opacity="0.34"/><rect x="309.0" y="758.8" width="1.2" height="1" fill="#2c2c78" opacity="0.75"/><rect x="533.1" y="650.7" width="1.2" height="1" fill="#2c2c78" opacity="0.70"/><rect x="336.8" y="785.9" width="1.2" height="1" fill="#2c2c78" opacity="0.43"/><rect x="377.0" y="649.9" width="1.2" height="1" fill="#2c2c78" opacity="0.76"/><rect x="531.9" y="668.8" width="1.2" height="1" fill="#6868b0" opacity="0.77"/><rect x="1275.4" y="690.2" width="1.2" height="1" fill="#4a4a98" opacity="0.40"/><rect x="578.7" y="697.1" width="1.2" height="1" fill="#6868b0" opacity="0.44"/><rect x="778.1" y="676.6" width="1.2" height="1" fill="#23236a" opacity="0.70"/><rect x="1302.2" y="653.9" width="1.2" height="1" fill="#3a3a8c" opacity="0.67"/><rect x="832.1" y="678.5" width="1.2" height="1" fill="#a8a8d8" opacity="0.42"/><rect x="721.9" y="754.0" width="1.2" height="1" fill="#2c2c78" opacity="0.63"/><rect x="826.7" y="791.1" width="1.2" height="1" fill="#23236a" opacity="0.64"/><rect x="1289.4" y="703.2" width="1.2" height="1" fill="#4a4a98" opacity="0.50"/><rect x="616.4" y="656.8" width="1.2" height="1" fill="#4a4a98" opacity="0.31"/><rect x="911.0" y="789.7" width="1.2" height="1" fill="#2c2c78" opacity="0.38"/><rect x="337.6" y="783.4" width="1.2" height="1" fill="#23236a" opacity="0.60"/><rect x="982.2" y="655.3" width="1.2" height="1" fill="#4a4a98" opacity="0.38"/><rect x="720.6" y="690.4" width="1.2" height="1" fill="#23236a" opacity="0.79"/><rect x="827.9" y="687.4" width="1.2" height="1" fill="#23236a" opacity="0.41"/><rect x="441.9" y="702.0" width="1.2" height="1" fill="#2c2c78" opacity="0.54"/><rect x="780.9" y="680.4" width="1.2" height="1" fill="#3a3a8c" opacity="0.35"/><rect x="1114.1" y="671.2" width="1.2" height="1" fill="#3a3a8c" opacity="0.50"/><rect x="565.6" y="749.4" width="1.2" height="1" fill="#2c2c78" opacity="0.59"/><rect x="808.9" y="768.8" width="1.2" height="1" fill="#2c2c78" opacity="0.68"/><rect x="1011.9" y="727.6" width="1.2" height="1" fill="#23236a" opacity="0.66"/><rect x="929.8" y="655.0" width="1.2" height="1" fill="#2c2c78" opacity="0.67"/><rect x="1109.0" y="670.4" width="1.2" height="1" fill="#3a3a8c" opacity="0.71"/><rect x="867.1" y="791.7" width="1.2" height="1" fill="#6868b0" opacity="0.34"/><rect x="292.4" y="750.6" width="1.2" height="1" fill="#2c2c78" opacity="0.49"/><rect x="726.5" y="656.2" width="1.2" height="1" fill="#3a3a8c" opacity="0.61"/><rect x="969.5" y="726.8" width="1.2" height="1" fill="#3a3a8c" opacity="0.53"/><rect x="322.3" y="798.1" width="1.2" height="1" fill="#2c2c78" opacity="0.63"/><rect x="318.0" y="766.6" width="1.2" height="1" fill="#23236a" opacity="0.70"/><rect x="1144.9" y="685.8" width="1.2" height="1" fill="#6868b0" opacity="0.42"/><rect x="936.9" y="722.1" width="1.2" height="1" fill="#2c2c78" opacity="0.34"/><rect x="1213.1" y="694.3" width="1.2" height="1" fill="#3a3a8c" opacity="0.61"/><rect x="929.3" y="660.5" width="1.2" height="1" fill="#4a4a98" opacity="0.47"/><rect x="938.6" y="759.6" width="1.2" height="1" fill="#4a4a98" opacity="0.31"/><rect x="312.3" y="691.3" width="1.2" height="1" fill="#2c2c78" opacity="0.65"/><rect x="964.3" y="694.8" width="1.2" height="1" fill="#23236a" opacity="0.53"/><rect x="742.3" y="667.1" width="1.2" height="1" fill="#6868b0" opacity="0.46"/><rect x="339.0" y="724.1" width="1.2" height="1" fill="#23236a" opacity="0.53"/><rect x="1117.1" y="803.9" width="1.2" height="1" fill="#a8a8d8" opacity="0.80"/><rect x="658.1" y="795.6" width="1.2" height="1" fill="#6868b0" opacity="0.34"/><rect x="343.7" y="768.3" width="1.2" height="1" fill="#23236a" opacity="0.78"/><rect x="388.6" y="780.1" width="1.2" height="1" fill="#23236a" opacity="0.74"/><rect x="993.5" y="685.3" width="1.2" height="1" fill="#a8a8d8" opacity="0.50"/><rect x="416.6" y="800.9" width="1.2" height="1" fill="#a8a8d8" opacity="0.50"/><rect x="1018.8" y="715.0" width="1.2" height="1" fill="#2c2c78" opacity="0.46"/><rect x="1138.6" y="648.3" width="1.2" height="1" fill="#23236a" opacity="0.72"/><rect x="375.2" y="797.2" width="1.2" height="1" fill="#3a3a8c" opacity="0.75"/><rect x="555.2" y="707.9" width="1.2" height="1" fill="#2c2c78" opacity="0.50"/><rect x="1170.2" y="660.3" width="1.2" height="1" fill="#2c2c78" opacity="0.68"/><rect x="1153.5" y="693.2" width="1.2" height="1" fill="#3a3a8c" opacity="0.72"/><rect x="550.8" y="798.6" width="1.2" height="1" fill="#6868b0" opacity="0.79"/><rect x="710.4" y="698.8" width="1.2" height="1" fill="#23236a" opacity="0.69"/><rect x="701.4" y="652.7" width="1.2" height="1" fill="#2c2c78" opacity="0.76"/><rect x="1245.1" y="736.4" width="1.2" height="1" fill="#2c2c78" opacity="0.32"/><rect x="1024.3" y="720.6" width="1.2" height="1" fill="#4a4a98" opacity="0.62"/><rect x="551.4" y="655.9" width="1.2" height="1" fill="#4a4a98" opacity="0.39"/><rect x="687.8" y="693.4" width="1.2" height="1" fill="#23236a" opacity="0.67"/><rect x="1282.9" y="689.9" width="1.2" height="1" fill="#6868b0" opacity="0.45"/><rect x="838.8" y="711.5" width="1.2" height="1" fill="#4a4a98" opacity="0.62"/><rect x="327.7" y="728.6" width="1.2" height="1" fill="#a8a8d8" opacity="0.58"/><rect x="728.2" y="701.6" width="1.2" height="1" fill="#a8a8d8" opacity="0.51"/><rect x="828.7" y="687.3" width="1.2" height="1" fill="#4a4a98" opacity="0.47"/><rect x="344.6" y="686.5" width="1.2" height="1" fill="#23236a" opacity="0.70"/><rect x="462.3" y="651.2" width="1.2" height="1" fill="#2c2c78" opacity="0.49"/><rect x="1038.6" y="681.8" width="1.2" height="1" fill="#23236a" opacity="0.47"/><rect x="313.8" y="692.7" width="1.2" height="1" fill="#23236a" opacity="0.36"/><rect x="781.6" y="749.4" width="1.2" height="1" fill="#6868b0" opacity="0.35"/><rect x="1198.6" y="709.9" width="1.2" height="1" fill="#a8a8d8" opacity="0.52"/><rect x="578.7" y="779.1" width="1.2" height="1" fill="#3a3a8c" opacity="0.36"/><rect x="698.7" y="771.0" width="1.2" height="1" fill="#a8a8d8" opacity="0.78"/><rect x="767.2" y="659.8" width="1.2" height="1" fill="#a8a8d8" opacity="0.79"/><rect x="511.4" y="665.6" width="1.2" height="1" fill="#4a4a98" opacity="0.38"/><rect x="1278.2" y="665.5" width="1.2" height="1" fill="#a8a8d8" opacity="0.34"/><rect x="1071.5" y="648.2" width="1.2" height="1" fill="#4a4a98" opacity="0.42"/><rect x="1223.1" y="751.9" width="1.2" height="1" fill="#23236a" opacity="0.78"/><rect x="912.1" y="733.0" width="1.2" height="1" fill="#2c2c78" opacity="0.65"/><rect x="366.9" y="659.3" width="1.2" height="1" fill="#6868b0" opacity="0.49"/><rect x="485.0" y="744.8" width="1.2" height="1" fill="#3a3a8c" opacity="0.57"/><rect x="1304.2" y="692.9" width="1.2" height="1" fill="#23236a" opacity="0.62"/><rect x="1184.8" y="724.5" width="1.2" height="1" fill="#6868b0" opacity="0.57"/><rect x="279.0" y="714.3" width="1.2" height="1" fill="#23236a" opacity="0.33"/><rect x="453.8" y="790.5" width="1.2" height="1" fill="#2c2c78" opacity="0.34"/><rect x="489.5" y="716.3" width="1.2" height="1" fill="#23236a" opacity="0.41"/><rect x="284.1" y="702.4" width="1.2" height="1" fill="#2c2c78" opacity="0.48"/><rect x="668.1" y="649.1" width="1.2" height="1" fill="#23236a" opacity="0.67"/><rect x="783.2" y="681.0" width="1.2" height="1" fill="#6868b0" opacity="0.46"/><rect x="1117.2" y="685.2" width="1.2" height="1" fill="#6868b0" opacity="0.43"/><rect x="1190.7" y="665.6" width="1.2" height="1" fill="#a8a8d8" opacity="0.61"/><rect x="1198.3" y="726.1" width="1.2" height="1" fill="#3a3a8c" opacity="0.77"/><rect x="403.2" y="711.3" width="1.2" height="1" fill="#6868b0" opacity="0.31"/><rect x="879.9" y="714.9" width="1.2" height="1" fill="#3a3a8c" opacity="0.39"/><rect x="724.6" y="762.6" width="1.2" height="1" fill="#23236a" opacity="0.67"/><rect x="1305.4" y="798.0" width="1.2" height="1" fill="#23236a" opacity="0.40"/><rect x="939.6" y="732.5" width="1.2" height="1" fill="#a8a8d8" opacity="0.32"/><rect x="952.3" y="709.0" width="1.2" height="1" fill="#23236a" opacity="0.79"/><rect x="717.0" y="665.5" width="1.2" height="1" fill="#2c2c78" opacity="0.44"/><rect x="620.6" y="801.8" width="1.2" height="1" fill="#2c2c78" opacity="0.58"/><rect x="1052.3" y="709.2" width="1.2" height="1" fill="#23236a" opacity="0.71"/><rect x="706.4" y="655.9" width="1.2" height="1" fill="#a8a8d8" opacity="0.40"/><rect x="822.0" y="719.9" width="1.2" height="1" fill="#23236a" opacity="0.48"/><rect x="1198.8" y="652.9" width="1.2" height="1" fill="#2c2c78" opacity="0.42"/><rect x="910.9" y="713.2" width="1.2" height="1" fill="#2c2c78" opacity="0.32"/><rect x="314.3" y="796.1" width="1.2" height="1" fill="#23236a" opacity="0.40"/><rect x="314.6" y="745.5" width="1.2" height="1" fill="#23236a" opacity="0.44"/><rect x="1263.2" y="747.3" width="1.2" height="1" fill="#23236a" opacity="0.67"/><rect x="979.0" y="796.8" width="1.2" height="1" fill="#23236a" opacity="0.30"/><rect x="1049.0" y="795.5" width="1.2" height="1" fill="#2c2c78" opacity="0.31"/><rect x="495.9" y="724.5" width="1.2" height="1" fill="#a8a8d8" opacity="0.78"/><rect x="657.7" y="688.4" width="1.2" height="1" fill="#2c2c78" opacity="0.71"/><rect x="388.7" y="727.9" width="1.2" height="1" fill="#3a3a8c" opacity="0.70"/><rect x="1030.8" y="780.5" width="1.2" height="1" fill="#4a4a98" opacity="0.60"/><rect x="595.5" y="699.4" width="1.2" height="1" fill="#23236a" opacity="0.69"/><rect x="879.5" y="730.4" width="1.2" height="1" fill="#2c2c78" opacity="0.68"/><rect x="510.1" y="658.4" width="1.2" height="1" fill="#3a3a8c" opacity="0.54"/><rect x="825.3" y="673.9" width="1.2" height="1" fill="#2c2c78" opacity="0.74"/><rect x="1295.1" y="690.6" width="1.2" height="1" fill="#2c2c78" opacity="0.40"/><rect x="694.3" y="807.1" width="1.2" height="1" fill="#a8a8d8" opacity="0.39"/><rect x="388.9" y="722.2" width="1.2" height="1" fill="#6868b0" opacity="0.67"/><rect x="1145.8" y="755.0" width="1.2" height="1" fill="#2c2c78" opacity="0.69"/><rect x="559.6" y="693.0" width="1.2" height="1" fill="#23236a" opacity="0.49"/><rect x="1030.4" y="680.1" width="1.2" height="1" fill="#6868b0" opacity="0.39"/><rect x="497.6" y="693.3" width="1.2" height="1" fill="#6868b0" opacity="0.46"/><rect x="667.8" y="807.8" width="1.2" height="1" fill="#6868b0" opacity="0.62"/><rect x="354.6" y="722.7" width="1.2" height="1" fill="#3a3a8c" opacity="0.35"/><rect x="751.2" y="779.9" width="1.2" height="1" fill="#a8a8d8" opacity="0.76"/><rect x="290.8" y="695.3" width="1.2" height="1" fill="#2c2c78" opacity="0.33"/><rect x="884.5" y="781.3" width="1.2" height="1" fill="#6868b0" opacity="0.77"/><rect x="642.6" y="787.4" width="1.2" height="1" fill="#a8a8d8" opacity="0.60"/><rect x="1069.5" y="755.0" width="1.2" height="1" fill="#3a3a8c" opacity="0.35"/><rect x="879.9" y="747.8" width="1.2" height="1" fill="#6868b0" opacity="0.32"/><rect x="608.4" y="655.1" width="1.2" height="1" fill="#23236a" opacity="0.32"/><rect x="1024.2" y="795.1" width="1.2" height="1" fill="#3a3a8c" opacity="0.71"/><rect x="681.5" y="707.9" width="1.2" height="1" fill="#23236a" opacity="0.34"/><rect x="281.4" y="727.8" width="1.2" height="1" fill="#a8a8d8" opacity="0.33"/><rect x="355.5" y="711.6" width="1.2" height="1" fill="#4a4a98" opacity="0.62"/><rect x="344.6" y="674.4" width="1.2" height="1" fill="#23236a" opacity="0.50"/><rect x="548.3" y="697.5" width="1.2" height="1" fill="#3a3a8c" opacity="0.46"/><rect x="848.5" y="705.5" width="1.2" height="1" fill="#2c2c78" opacity="0.31"/><rect x="1060.7" y="777.2" width="1.2" height="1" fill="#6868b0" opacity="0.50"/><rect x="677.3" y="799.7" width="1.2" height="1" fill="#2c2c78" opacity="0.75"/><rect x="697.2" y="780.1" width="1.2" height="1" fill="#2c2c78" opacity="0.59"/><rect x="634.6" y="772.5" width="1.2" height="1" fill="#4a4a98" opacity="0.31"/><rect x="832.6" y="751.1" width="1.2" height="1" fill="#2c2c78" opacity="0.34"/><rect x="907.5" y="707.7" width="1.2" height="1" fill="#4a4a98" opacity="0.37"/><rect x="548.3" y="731.9" width="1.2" height="1" fill="#2c2c78" opacity="0.35"/><rect x="767.9" y="777.6" width="1.2" height="1" fill="#6868b0" opacity="0.45"/><rect x="1135.5" y="655.0" width="1.2" height="1" fill="#a8a8d8" opacity="0.46"/><rect x="892.1" y="750.5" width="1.2" height="1" fill="#2c2c78" opacity="0.75"/><rect x="905.6" y="780.8" width="1.2" height="1" fill="#4a4a98" opacity="0.62"/><rect x="1156.0" y="748.0" width="1.2" height="1" fill="#6868b0" opacity="0.71"/><rect x="441.9" y="683.1" width="1.2" height="1" fill="#2c2c78" opacity="0.77"/><rect x="413.9" y="705.8" width="1.2" height="1" fill="#4a4a98" opacity="0.42"/><rect x="1016.4" y="792.5" width="1.2" height="1" fill="#3a3a8c" opacity="0.74"/><rect x="1141.0" y="756.2" width="1.2" height="1" fill="#23236a" opacity="0.36"/><rect x="883.5" y="736.6" width="1.2" height="1" fill="#23236a" opacity="0.62"/><rect x="574.7" y="688.1" width="1.2" height="1" fill="#2c2c78" opacity="0.63"/><rect x="721.6" y="718.6" width="1.2" height="1" fill="#3a3a8c" opacity="0.30"/><rect x="1293.3" y="722.9" width="1.2" height="1" fill="#a8a8d8" opacity="0.68"/><rect x="1074.8" y="721.8" width="1.2" height="1" fill="#4a4a98" opacity="0.71"/><rect x="672.4" y="658.8" width="1.2" height="1" fill="#23236a" opacity="0.52"/><rect x="345.2" y="719.2" width="1.2" height="1" fill="#3a3a8c" opacity="0.32"/><rect x="386.1" y="796.5" width="1.2" height="1" fill="#23236a" opacity="0.69"/><rect x="790.2" y="656.7" width="1.2" height="1" fill="#2c2c78" opacity="0.63"/><rect x="1079.3" y="652.2" width="1.2" height="1" fill="#2c2c78" opacity="0.80"/><rect x="1024.0" y="779.2" width="1.2" height="1" fill="#6868b0" opacity="0.37"/><rect x="1186.8" y="694.3" width="1.2" height="1" fill="#4a4a98" opacity="0.64"/><rect x="1012.3" y="683.6" width="1.2" height="1" fill="#23236a" opacity="0.61"/><rect x="515.4" y="700.1" width="1.2" height="1" fill="#23236a" opacity="0.75"/><rect x="731.8" y="688.9" width="1.2" height="1" fill="#a8a8d8" opacity="0.40"/><rect x="526.6" y="729.5" width="1.2" height="1" fill="#23236a" opacity="0.49"/><rect x="458.9" y="713.0" width="1.2" height="1" fill="#23236a" opacity="0.64"/><rect x="1197.1" y="675.2" width="1.2" height="1" fill="#23236a" opacity="0.36"/><rect x="810.6" y="750.4" width="1.2" height="1" fill="#23236a" opacity="0.78"/><rect x="728.2" y="732.0" width="1.2" height="1" fill="#2c2c78" opacity="0.43"/><rect x="815.8" y="785.9" width="1.2" height="1" fill="#23236a" opacity="0.43"/><rect x="1297.9" y="741.0" width="1.2" height="1" fill="#23236a" opacity="0.47"/><rect x="334.3" y="685.0" width="1.2" height="1" fill="#3a3a8c" opacity="0.45"/><rect x="795.1" y="697.9" width="1.2" height="1" fill="#23236a" opacity="0.67"/><rect x="1039.9" y="683.7" width="1.2" height="1" fill="#23236a" opacity="0.61"/><rect x="706.2" y="730.5" width="1.2" height="1" fill="#3a3a8c" opacity="0.37"/><rect x="488.9" y="753.2" width="1.2" height="1" fill="#3a3a8c" opacity="0.33"/><rect x="849.1" y="696.9" width="1.2" height="1" fill="#23236a" opacity="0.57"/><rect x="686.0" y="696.5" width="1.2" height="1" fill="#4a4a98" opacity="0.40"/><rect x="909.4" y="724.5" width="1.2" height="1" fill="#4a4a98" opacity="0.31"/><rect x="1097.6" y="761.9" width="1.2" height="1" fill="#a8a8d8" opacity="0.35"/><rect x="924.5" y="788.3" width="1.2" height="1" fill="#23236a" opacity="0.50"/><rect x="528.1" y="649.9" width="1.2" height="1" fill="#23236a" opacity="0.60"/><rect x="861.2" y="744.9" width="1.2" height="1" fill="#a8a8d8" opacity="0.42"/><rect x="1205.7" y="655.1" width="1.2" height="1" fill="#3a3a8c" opacity="0.50"/><rect x="499.9" y="657.4" width="1.2" height="1" fill="#2c2c78" opacity="0.31"/><rect x="832.0" y="799.5" width="1.2" height="1" fill="#4a4a98" opacity="0.51"/><rect x="797.4" y="751.5" width="1.2" height="1" fill="#2c2c78" opacity="0.71"/><rect x="433.1" y="697.8" width="1.2" height="1" fill="#23236a" opacity="0.61"/><rect x="1301.7" y="764.6" width="1.2" height="1" fill="#a8a8d8" opacity="0.66"/><rect x="254.7" y="784.0" width="1.2" height="1" fill="#a8a8d8" opacity="0.34"/><rect x="942.9" y="676.2" width="1.2" height="1" fill="#2c2c78" opacity="0.43"/><rect x="930.7" y="667.8" width="1.2" height="1" fill="#23236a" opacity="0.66"/><rect x="529.9" y="737.2" width="1.2" height="1" fill="#2c2c78" opacity="0.64"/><rect x="1220.3" y="804.5" width="1.2" height="1" fill="#23236a" opacity="0.62"/><rect x="1271.0" y="682.9" width="1.2" height="1" fill="#3a3a8c" opacity="0.38"/><rect x="1207.0" y="783.5" width="1.2" height="1" fill="#6868b0" opacity="0.77"/><rect x="1038.9" y="700.6" width="1.2" height="1" fill="#2c2c78" opacity="0.46"/><rect x="501.5" y="794.1" width="1.2" height="1" fill="#a8a8d8" opacity="0.54"/><rect x="810.5" y="649.0" width="1.2" height="1" fill="#3a3a8c" opacity="0.52"/><rect x="1016.1" y="739.8" width="1.2" height="1" fill="#23236a" opacity="0.69"/><rect x="663.1" y="742.2" width="1.2" height="1" fill="#4a4a98" opacity="0.37"/><rect x="276.5" y="665.2" width="1.2" height="1" fill="#4a4a98" opacity="0.47"/><rect x="398.4" y="652.6" width="1.2" height="1" fill="#3a3a8c" opacity="0.37"/><rect x="930.2" y="654.9" width="1.2" height="1" fill="#2c2c78" opacity="0.67"/><rect x="317.7" y="743.1" width="1.2" height="1" fill="#23236a" opacity="0.40"/><rect x="1259.8" y="734.0" width="1.2" height="1" fill="#2c2c78" opacity="0.74"/><rect x="1049.1" y="762.5" width="1.2" height="1" fill="#2c2c78" opacity="0.35"/><rect x="466.1" y="666.0" width="1.2" height="1" fill="#3a3a8c" opacity="0.77"/><rect x="1213.8" y="769.4" width="1.2" height="1" fill="#2c2c78" opacity="0.71"/><rect x="917.4" y="694.3" width="1.2" height="1" fill="#2c2c78" opacity="0.37"/><rect x="1087.5" y="752.1" width="1.2" height="1" fill="#23236a" opacity="0.46"/><rect x="697.2" y="651.4" width="1.2" height="1" fill="#23236a" opacity="0.77"/><rect x="299.3" y="770.3" width="1.2" height="1" fill="#23236a" opacity="0.68"/><rect x="886.1" y="724.6" width="1.2" height="1" fill="#23236a" opacity="0.61"/><rect x="280.8" y="714.5" width="1.2" height="1" fill="#2c2c78" opacity="0.56"/><rect x="352.2" y="723.5" width="1.2" height="1" fill="#3a3a8c" opacity="0.57"/><rect x="477.6" y="786.8" width="1.2" height="1" fill="#2c2c78" opacity="0.59"/><rect x="552.3" y="718.2" width="1.2" height="1" fill="#6868b0" opacity="0.44"/><rect x="1043.5" y="656.7" width="1.2" height="1" fill="#23236a" opacity="0.55"/><rect x="769.0" y="776.3" width="1.2" height="1" fill="#4a4a98" opacity="0.78"/><rect x="876.1" y="802.1" width="1.2" height="1" fill="#23236a" opacity="0.59"/><rect x="416.4" y="779.3" width="1.2" height="1" fill="#6868b0" opacity="0.55"/><rect x="364.5" y="750.5" width="1.2" height="1" fill="#2c2c78" opacity="0.55"/><rect x="1298.6" y="738.4" width="1.2" height="1" fill="#2c2c78" opacity="0.61"/><rect x="625.0" y="712.6" width="1.2" height="1" fill="#2c2c78" opacity="0.75"/><rect x="1037.9" y="716.0" width="1.2" height="1" fill="#3a3a8c" opacity="0.49"/><rect x="569.3" y="716.9" width="1.2" height="1" fill="#4a4a98" opacity="0.49"/><rect x="1185.0" y="685.6" width="1.2" height="1" fill="#a8a8d8" opacity="0.36"/><rect x="877.7" y="759.0" width="1.2" height="1" fill="#3a3a8c" opacity="0.47"/><rect x="594.3" y="673.0" width="1.2" height="1" fill="#a8a8d8" opacity="0.63"/><rect x="1034.5" y="675.3" width="1.2" height="1" fill="#a8a8d8" opacity="0.64"/><rect x="520.6" y="685.2" width="1.2" height="1" fill="#23236a" opacity="0.53"/><rect x="1186.2" y="686.3" width="1.2" height="1" fill="#6868b0" opacity="0.43"/><rect x="1048.0" y="781.1" width="1.2" height="1" fill="#4a4a98" opacity="0.66"/><rect x="1281.3" y="764.4" width="1.2" height="1" fill="#23236a" opacity="0.38"/><rect x="595.8" y="678.5" width="1.2" height="1" fill="#2c2c78" opacity="0.38"/><rect x="945.4" y="679.5" width="1.2" height="1" fill="#4a4a98" opacity="0.79"/><rect x="1090.6" y="766.1" width="1.2" height="1" fill="#2c2c78" opacity="0.44"/><rect x="363.8" y="794.7" width="1.2" height="1" fill="#23236a" opacity="0.40"/><rect x="659.6" y="653.5" width="1.2" height="1" fill="#2c2c78" opacity="0.73"/><rect x="710.7" y="683.8" width="1.2" height="1" fill="#23236a" opacity="0.53"/><rect x="398.3" y="745.2" width="1.2" height="1" fill="#2c2c78" opacity="0.30"/><rect x="504.8" y="785.3" width="1.2" height="1" fill="#2c2c78" opacity="0.72"/><rect x="956.0" y="753.1" width="1.2" height="1" fill="#6868b0" opacity="0.64"/><rect x="928.0" y="721.1" width="1.2" height="1" fill="#23236a" opacity="0.43"/><rect x="990.7" y="792.1" width="1.2" height="1" fill="#6868b0" opacity="0.69"/><rect x="1003.9" y="749.4" width="1.2" height="1" fill="#23236a" opacity="0.72"/><rect x="759.7" y="651.2" width="1.2" height="1" fill="#2c2c78" opacity="0.56"/><rect x="948.8" y="788.6" width="1.2" height="1" fill="#23236a" opacity="0.69"/><rect x="660.0" y="726.9" width="1.2" height="1" fill="#2c2c78" opacity="0.32"/><rect x="824.0" y="673.9" width="1.2" height="1" fill="#6868b0" opacity="0.56"/><rect x="355.2" y="740.5" width="1.2" height="1" fill="#6868b0" opacity="0.66"/><rect x="790.9" y="750.9" width="1.2" height="1" fill="#23236a" opacity="0.56"/><rect x="683.0" y="800.6" width="1.2" height="1" fill="#6868b0" opacity="0.80"/><rect x="442.8" y="730.7" width="1.2" height="1" fill="#2c2c78" opacity="0.66"/><rect x="898.8" y="750.6" width="1.2" height="1" fill="#23236a" opacity="0.44"/><rect x="671.7" y="650.1" width="1.2" height="1" fill="#2c2c78" opacity="0.76"/><rect x="914.3" y="756.7" width="1.2" height="1" fill="#23236a" opacity="0.35"/><rect x="569.7" y="712.5" width="1.2" height="1" fill="#6868b0" opacity="0.80"/><rect x="1266.5" y="722.4" width="1.2" height="1" fill="#4a4a98" opacity="0.36"/><rect x="1071.2" y="778.3" width="1.2" height="1" fill="#6868b0" opacity="0.53"/><rect x="843.8" y="684.4" width="1.2" height="1" fill="#4a4a98" opacity="0.48"/><rect x="925.1" y="779.8" width="1.2" height="1" fill="#2c2c78" opacity="0.53"/><rect x="560.0" y="736.3" width="1.2" height="1" fill="#4a4a98" opacity="0.69"/><rect x="745.6" y="774.2" width="1.2" height="1" fill="#6868b0" opacity="0.43"/><rect x="646.7" y="688.8" width="1.2" height="1" fill="#2c2c78" opacity="0.64"/><rect x="758.5" y="777.7" width="1.2" height="1" fill="#23236a" opacity="0.48"/><rect x="941.7" y="699.6" width="1.2" height="1" fill="#a8a8d8" opacity="0.51"/><rect x="923.5" y="754.1" width="1.2" height="1" fill="#23236a" opacity="0.38"/><rect x="569.4" y="710.0" width="1.2" height="1" fill="#2c2c78" opacity="0.71"/><rect x="1208.2" y="774.2" width="1.2" height="1" fill="#4a4a98" opacity="0.57"/><rect x="613.9" y="741.8" width="1.2" height="1" fill="#3a3a8c" opacity="0.40"/><rect x="324.3" y="695.2" width="1.2" height="1" fill="#2c2c78" opacity="0.59"/><rect x="1153.4" y="677.9" width="1.2" height="1" fill="#a8a8d8" opacity="0.47"/><rect x="409.8" y="793.6" width="1.2" height="1" fill="#4a4a98" opacity="0.60"/><rect x="977.3" y="805.3" width="1.2" height="1" fill="#2c2c78" opacity="0.63"/><rect x="1195.5" y="774.9" width="1.2" height="1" fill="#23236a" opacity="0.40"/><rect x="982.4" y="733.5" width="1.2" height="1" fill="#a8a8d8" opacity="0.64"/><rect x="372.0" y="667.1" width="1.2" height="1" fill="#2c2c78" opacity="0.42"/><rect x="395.7" y="727.4" width="1.2" height="1" fill="#3a3a8c" opacity="0.54"/><rect x="1207.8" y="760.8" width="1.2" height="1" fill="#6868b0" opacity="0.55"/><rect x="819.9" y="786.9" width="1.2" height="1" fill="#3a3a8c" opacity="0.38"/><rect x="587.9" y="760.0" width="1.2" height="1" fill="#a8a8d8" opacity="0.63"/><rect x="1139.0" y="708.4" width="1.2" height="1" fill="#2c2c78" opacity="0.80"/><rect x="964.5" y="677.1" width="1.2" height="1" fill="#23236a" opacity="0.62"/><rect x="278.2" y="746.2" width="1.2" height="1" fill="#23236a" opacity="0.70"/><rect x="347.6" y="726.0" width="1.2" height="1" fill="#4a4a98" opacity="0.32"/><rect x="1009.3" y="748.7" width="1.2" height="1" fill="#23236a" opacity="0.35"/><rect x="946.6" y="703.0" width="1.2" height="1" fill="#6868b0" opacity="0.44"/><rect x="610.5" y="688.5" width="1.2" height="1" fill="#3a3a8c" opacity="0.71"/><rect x="558.5" y="781.3" width="1.2" height="1" fill="#2c2c78" opacity="0.47"/><rect x="1291.3" y="788.5" width="1.2" height="1" fill="#23236a" opacity="0.79"/><rect x="941.8" y="775.5" width="1.2" height="1" fill="#23236a" opacity="0.40"/><rect x="1004.0" y="668.5" width="1.2" height="1" fill="#2c2c78" opacity="0.69"/><rect x="290.5" y="764.4" width="1.2" height="1" fill="#2c2c78" opacity="0.57"/><rect x="300.7" y="696.4" width="1.2" height="1" fill="#3a3a8c" opacity="0.32"/><rect x="1119.3" y="724.5" width="1.2" height="1" fill="#3a3a8c" opacity="0.69"/><rect x="1212.4" y="746.5" width="1.2" height="1" fill="#4a4a98" opacity="0.61"/><rect x="986.2" y="744.0" width="1.2" height="1" fill="#2c2c78" opacity="0.41"/><rect x="955.0" y="721.7" width="1.2" height="1" fill="#4a4a98" opacity="0.35"/><rect x="440.2" y="654.0" width="1.2" height="1" fill="#2c2c78" opacity="0.76"/><rect x="943.1" y="707.4" width="1.2" height="1" fill="#4a4a98" opacity="0.69"/><rect x="843.8" y="689.5" width="1.2" height="1" fill="#23236a" opacity="0.39"/><rect x="284.3" y="651.3" width="1.2" height="1" fill="#3a3a8c" opacity="0.55"/><rect x="801.5" y="780.8" width="1.2" height="1" fill="#2c2c78" opacity="0.59"/><rect x="1221.7" y="719.9" width="1.2" height="1" fill="#3a3a8c" opacity="0.64"/><rect x="877.5" y="807.9" width="1.2" height="1" fill="#4a4a98" opacity="0.54"/><rect x="685.2" y="664.4" width="1.2" height="1" fill="#a8a8d8" opacity="0.41"/><rect x="408.9" y="650.5" width="1.2" height="1" fill="#3a3a8c" opacity="0.30"/><rect x="957.5" y="806.9" width="1.2" height="1" fill="#2c2c78" opacity="0.41"/><rect x="376.6" y="724.0" width="1.2" height="1" fill="#23236a" opacity="0.66"/><rect x="504.8" y="766.1" width="1.2" height="1" fill="#4a4a98" opacity="0.76"/><rect x="635.8" y="768.3" width="1.2" height="1" fill="#4a4a98" opacity="0.66"/><rect x="337.3" y="749.2" width="1.2" height="1" fill="#a8a8d8" opacity="0.53"/><rect x="1236.3" y="688.9" width="1.2" height="1" fill="#3a3a8c" opacity="0.66"/><rect x="260.1" y="650.4" width="1.2" height="1" fill="#2c2c78" opacity="0.49"/><rect x="579.2" y="744.6" width="1.2" height="1" fill="#a8a8d8" opacity="0.60"/><rect x="583.3" y="800.8" width="1.2" height="1" fill="#a8a8d8" opacity="0.53"/><rect x="424.5" y="803.6" width="1.2" height="1" fill="#2c2c78" opacity="0.48"/><rect x="931.6" y="749.4" width="1.2" height="1" fill="#2c2c78" opacity="0.54"/><rect x="1072.8" y="720.9" width="1.2" height="1" fill="#23236a" opacity="0.69"/><rect x="848.8" y="695.1" width="1.2" height="1" fill="#3a3a8c" opacity="0.61"/>
<rect x="369.7" y="485" width="1.3" height="161" fill="#0a0a3c" opacity=".9"/>
<rect x="369.7" y="646" width="1.3" height="165" fill="#12124a" opacity=".45"/>
<defs><linearGradient id="hfade" gradientUnits="userSpaceOnUse" x1="0" y1="485" x2="0" y2="634"><stop offset="0" stop-color="#fff"/><stop offset=".45" stop-color="#fff" stop-opacity=".85"/><stop offset=".8" stop-color="#fff" stop-opacity=".4"/><stop offset="1" stop-color="#fff" stop-opacity=".25"/></linearGradient><mask id="hmask" maskUnits="userSpaceOnUse" x="1060" y="480" width="80" height="160"><rect x="1060" y="480" width="80" height="160" fill="url(#hfade)"/></mask></defs>
<g mask="url(#hmask)">
<path d="M1082.99 484.00 L1082.95 485.00 L1082.92 486.00 L1082.89 487.00 L1082.86 488.00 L1082.83 489.00 L1082.80 490.00 L1082.78 491.00 L1082.76 492.00 L1082.75 493.00 L1082.74 494.00 L1082.73 495.00 L1082.73 496.00 L1082.73 497.00 L1082.73 498.00 L1082.74 499.00 L1082.75 500.00 L1082.78 501.00 L1082.82 502.00 L1082.86 503.00 L1082.90 504.00 L1082.95 505.00 L1082.99 506.00 L1083.04 507.00 L1083.09 508.00 L1083.14 509.00 L1083.19 510.00 L1083.23 511.00 L1083.28 512.00 L1083.33 513.00 L1083.37 514.00 L1083.41 515.00 L1083.45 516.00 L1083.49 517.00 L1083.52 518.00 L1083.55 519.00 L1083.58 520.00 L1083.62 521.00 L1083.65 522.00 L1083.68 523.00 L1083.71 524.00 L1083.73 525.00 L1083.74 526.00 L1083.76 527.00 L1083.77 528.00 L1083.78 529.00 L1083.78 530.00 L1083.78 531.00 L1083.78 532.00 L1083.78 533.00 L1083.78 534.00 L1083.77 535.00 L1084.03 536.00 L1084.28 537.00 L1084.54 538.00 L1084.80 539.00 L1084.80 540.00 L1084.54 541.00 L1084.29 542.00 L1084.03 543.00 L1083.93 544.00 L1083.97 545.00 L1084.02 546.00 L1084.07 547.00 L1084.12 548.00 L1084.18 549.00 L1084.24 550.00 L1084.30 551.00 L1084.37 552.00 L1084.44 553.00 L1084.51 554.00 L1084.59 555.00 L1084.67 556.00 L1084.76 557.00 L1084.84 558.00 L1084.94 559.00 L1085.03 560.00 L1085.13 561.00 L1085.23 562.00 L1085.34 563.00 L1085.45 564.00 L1085.55 565.00 L1085.66 566.00 L1085.77 567.00 L1085.87 568.00 L1085.98 569.00 L1086.08 570.00 L1086.18 571.00 L1086.28 572.00 L1086.38 573.00 L1086.47 574.00 L1086.57 575.00 L1086.65 576.00 L1086.74 577.00 L1086.82 578.00 L1086.90 579.00 L1086.94 580.00 L1086.98 581.00 L1087.02 582.00 L1087.05 583.00 L1087.08 584.00 L1087.11 585.00 L1087.13 586.00 L1087.15 587.00 L1087.16 588.00 L1087.18 589.00 L1087.19 590.00 L1087.20 591.00 L1087.22 592.00 L1087.23 593.00 L1087.23 594.00 L1087.24 595.00 L1087.25 596.00 L1087.27 597.00 L1087.28 598.00 L1087.29 599.00 L1087.31 600.00 L1087.32 601.00 L1087.34 602.00 L1087.36 603.00 L1087.38 604.00 L1087.41 605.00 L1087.44 606.00 L1087.47 607.00 L1087.51 608.00 L1087.55 609.00 L1087.60 610.00 L1087.65 611.00 L1087.70 612.00 L1087.75 613.00 L1087.81 614.00 L1087.87 615.00 L1087.94 616.00 L1088.00 617.00 L1088.07 618.00 L1088.14 619.00 L1088.21 620.00 L1088.29 621.00 L1088.36 622.00 L1088.43 623.00 L1088.50 624.00 L1088.58 625.00 L1088.65 626.00 L1088.72 627.00 L1088.78 628.00 L1088.81 629.00 L1088.83 630.00 L1088.85 631.00 L1088.87 632.00 L1088.88 633.00 L1088.89 634.00 L1112.29 634.00 L1112.28 633.00 L1112.27 632.00 L1112.25 631.00 L1112.23 630.00 L1112.21 629.00 L1112.18 628.00 L1112.20 627.00 L1112.21 626.00 L1112.22 625.00 L1112.22 624.00 L1112.23 623.00 L1112.24 622.00 L1112.25 621.00 L1112.25 620.00 L1112.26 619.00 L1112.27 618.00 L1112.28 617.00 L1112.29 616.00 L1112.31 615.00 L1112.32 614.00 L1112.34 613.00 L1112.36 612.00 L1112.39 611.00 L1112.42 610.00 L1112.45 609.00 L1112.49 608.00 L1112.53 607.00 L1112.57 606.00 L1112.62 605.00 L1112.67 604.00 L1112.73 603.00 L1112.78 602.00 L1112.85 601.00 L1112.91 600.00 L1112.98 599.00 L1113.05 598.00 L1113.12 597.00 L1113.20 596.00 L1113.27 595.00 L1113.35 594.00 L1113.43 593.00 L1113.50 592.00 L1113.58 591.00 L1113.65 590.00 L1113.72 589.00 L1113.79 588.00 L1113.86 587.00 L1113.93 586.00 L1113.99 585.00 L1114.05 584.00 L1114.11 583.00 L1114.16 582.00 L1114.21 581.00 L1114.26 580.00 L1114.30 579.00 L1114.37 578.00 L1114.43 577.00 L1114.50 576.00 L1114.56 575.00 L1114.61 574.00 L1114.66 573.00 L1114.71 572.00 L1114.76 571.00 L1114.81 570.00 L1114.85 569.00 L1114.89 568.00 L1114.93 567.00 L1114.97 566.00 L1115.02 565.00 L1115.06 564.00 L1115.10 563.00 L1115.14 562.00 L1115.18 561.00 L1115.23 560.00 L1115.27 559.00 L1115.31 558.00 L1115.36 557.00 L1115.41 556.00 L1115.46 555.00 L1115.51 554.00 L1115.57 553.00 L1115.63 552.00 L1115.70 551.00 L1115.77 550.00 L1115.84 549.00 L1115.92 548.00 L1116.00 547.00 L1116.08 546.00 L1116.17 545.00 L1116.26 544.00 L1116.21 543.00 L1116.01 542.00 L1115.81 541.00 L1115.62 540.00 L1115.69 539.00 L1116.01 538.00 L1116.33 537.00 L1116.65 536.00 L1116.97 535.00 L1117.03 534.00 L1117.09 533.00 L1117.14 532.00 L1117.20 531.00 L1117.25 530.00 L1117.30 529.00 L1117.34 528.00 L1117.39 527.00 L1117.42 526.00 L1117.46 525.00 L1117.49 524.00 L1117.52 523.00 L1117.54 522.00 L1117.57 521.00 L1117.58 520.00 L1117.58 519.00 L1117.58 518.00 L1117.58 517.00 L1117.57 516.00 L1117.56 515.00 L1117.55 514.00 L1117.54 513.00 L1117.52 512.00 L1117.50 511.00 L1117.49 510.00 L1117.47 509.00 L1117.45 508.00 L1117.43 507.00 L1117.41 506.00 L1117.40 505.00 L1117.38 504.00 L1117.37 503.00 L1117.36 502.00 L1117.35 501.00 L1117.35 500.00 L1117.33 499.00 L1117.31 498.00 L1117.29 497.00 L1117.28 496.00 L1117.27 495.00 L1117.26 494.00 L1117.26 493.00 L1117.26 492.00 L1117.27 491.00 L1117.28 490.00 L1117.29 489.00 L1117.31 488.00 L1117.32 487.00 L1117.34 486.00 L1117.37 485.00 L1117.39 484.00 Z" fill="#000a5c" filter="url(#b4)" opacity=".95"/>
<path d="M1088.29 484.00 L1088.25 485.00 L1088.22 486.00 L1088.19 487.00 L1088.16 488.00 L1088.13 489.00 L1088.10 490.00 L1088.08 491.00 L1088.06 492.00 L1088.05 493.00 L1088.04 494.00 L1088.03 495.00 L1088.03 496.00 L1088.03 497.00 L1088.03 498.00 L1088.04 499.00 L1088.05 500.00 L1088.08 501.00 L1088.12 502.00 L1088.16 503.00 L1088.20 504.00 L1088.25 505.00 L1088.29 506.00 L1088.34 507.00 L1088.39 508.00 L1088.44 509.00 L1088.49 510.00 L1088.53 511.00 L1088.58 512.00 L1088.63 513.00 L1088.67 514.00 L1088.71 515.00 L1088.75 516.00 L1088.79 517.00 L1088.82 518.00 L1088.85 519.00 L1088.88 520.00 L1088.92 521.00 L1088.95 522.00 L1088.98 523.00 L1089.01 524.00 L1089.03 525.00 L1089.04 526.00 L1089.06 527.00 L1089.07 528.00 L1089.08 529.00 L1089.08 530.00 L1089.08 531.00 L1089.08 532.00 L1089.08 533.00 L1089.08 534.00 L1089.07 535.00 L1089.33 536.00 L1089.58 537.00 L1089.84 538.00 L1090.10 539.00 L1090.10 540.00 L1089.84 541.00 L1089.59 542.00 L1089.33 543.00 L1089.23 544.00 L1089.27 545.00 L1089.32 546.00 L1089.37 547.00 L1089.42 548.00 L1089.48 549.00 L1089.54 550.00 L1089.60 551.00 L1089.67 552.00 L1089.74 553.00 L1089.81 554.00 L1089.89 555.00 L1089.97 556.00 L1090.06 557.00 L1090.14 558.00 L1090.24 559.00 L1090.33 560.00 L1090.43 561.00 L1090.53 562.00 L1090.64 563.00 L1090.75 564.00 L1090.85 565.00 L1090.96 566.00 L1091.07 567.00 L1091.17 568.00 L1091.28 569.00 L1091.38 570.00 L1091.48 571.00 L1091.58 572.00 L1091.68 573.00 L1091.77 574.00 L1091.87 575.00 L1091.95 576.00 L1092.04 577.00 L1092.12 578.00 L1092.20 579.00 L1092.24 580.00 L1092.28 581.00 L1092.32 582.00 L1092.35 583.00 L1092.38 584.00 L1092.41 585.00 L1092.43 586.00 L1092.45 587.00 L1092.46 588.00 L1092.48 589.00 L1092.49 590.00 L1092.50 591.00 L1092.52 592.00 L1092.53 593.00 L1092.53 594.00 L1092.54 595.00 L1092.55 596.00 L1092.57 597.00 L1092.58 598.00 L1092.59 599.00 L1092.61 600.00 L1092.62 601.00 L1092.64 602.00 L1092.66 603.00 L1092.68 604.00 L1092.71 605.00 L1092.74 606.00 L1092.77 607.00 L1092.81 608.00 L1092.85 609.00 L1092.90 610.00 L1092.95 611.00 L1093.00 612.00 L1093.05 613.00 L1093.11 614.00 L1093.17 615.00 L1093.24 616.00 L1093.30 617.00 L1093.37 618.00 L1093.44 619.00 L1093.51 620.00 L1093.59 621.00 L1093.66 622.00 L1093.73 623.00 L1093.80 624.00 L1093.88 625.00 L1093.95 626.00 L1094.02 627.00 L1094.08 628.00 L1094.11 629.00 L1094.13 630.00 L1094.15 631.00 L1094.17 632.00 L1094.18 633.00 L1094.19 634.00 L1106.99 634.00 L1106.98 633.00 L1106.97 632.00 L1106.95 631.00 L1106.93 630.00 L1106.91 629.00 L1106.88 628.00 L1106.90 627.00 L1106.91 626.00 L1106.92 625.00 L1106.92 624.00 L1106.93 623.00 L1106.94 622.00 L1106.95 621.00 L1106.95 620.00 L1106.96 619.00 L1106.97 618.00 L1106.98 617.00 L1106.99 616.00 L1107.01 615.00 L1107.02 614.00 L1107.04 613.00 L1107.06 612.00 L1107.09 611.00 L1107.12 610.00 L1107.15 609.00 L1107.19 608.00 L1107.23 607.00 L1107.27 606.00 L1107.32 605.00 L1107.37 604.00 L1107.43 603.00 L1107.48 602.00 L1107.55 601.00 L1107.61 600.00 L1107.68 599.00 L1107.75 598.00 L1107.82 597.00 L1107.90 596.00 L1107.97 595.00 L1108.05 594.00 L1108.13 593.00 L1108.20 592.00 L1108.28 591.00 L1108.35 590.00 L1108.42 589.00 L1108.49 588.00 L1108.56 587.00 L1108.63 586.00 L1108.69 585.00 L1108.75 584.00 L1108.81 583.00 L1108.86 582.00 L1108.91 581.00 L1108.96 580.00 L1109.00 579.00 L1109.07 578.00 L1109.13 577.00 L1109.20 576.00 L1109.26 575.00 L1109.31 574.00 L1109.36 573.00 L1109.41 572.00 L1109.46 571.00 L1109.51 570.00 L1109.55 569.00 L1109.59 568.00 L1109.63 567.00 L1109.67 566.00 L1109.72 565.00 L1109.76 564.00 L1109.80 563.00 L1109.84 562.00 L1109.88 561.00 L1109.93 560.00 L1109.97 559.00 L1110.01 558.00 L1110.06 557.00 L1110.11 556.00 L1110.16 555.00 L1110.21 554.00 L1110.27 553.00 L1110.33 552.00 L1110.40 551.00 L1110.47 550.00 L1110.54 549.00 L1110.62 548.00 L1110.70 547.00 L1110.78 546.00 L1110.87 545.00 L1110.96 544.00 L1110.91 543.00 L1110.71 542.00 L1110.51 541.00 L1110.32 540.00 L1110.39 539.00 L1110.71 538.00 L1111.03 537.00 L1111.35 536.00 L1111.67 535.00 L1111.73 534.00 L1111.79 533.00 L1111.84 532.00 L1111.90 531.00 L1111.95 530.00 L1112.00 529.00 L1112.04 528.00 L1112.09 527.00 L1112.12 526.00 L1112.16 525.00 L1112.19 524.00 L1112.22 523.00 L1112.24 522.00 L1112.27 521.00 L1112.28 520.00 L1112.28 519.00 L1112.28 518.00 L1112.28 517.00 L1112.27 516.00 L1112.26 515.00 L1112.25 514.00 L1112.24 513.00 L1112.22 512.00 L1112.20 511.00 L1112.19 510.00 L1112.17 509.00 L1112.15 508.00 L1112.13 507.00 L1112.11 506.00 L1112.10 505.00 L1112.08 504.00 L1112.07 503.00 L1112.06 502.00 L1112.05 501.00 L1112.05 500.00 L1112.03 499.00 L1112.01 498.00 L1111.99 497.00 L1111.98 496.00 L1111.97 495.00 L1111.96 494.00 L1111.96 493.00 L1111.96 492.00 L1111.97 491.00 L1111.98 490.00 L1111.99 489.00 L1112.01 488.00 L1112.02 487.00 L1112.04 486.00 L1112.07 485.00 L1112.09 484.00 Z" fill="#0616a4" filter="url(#b3)" opacity=".95"/>
<path d="M1091.09 484.00 L1091.05 485.00 L1091.02 486.00 L1090.99 487.00 L1090.96 488.00 L1090.93 489.00 L1090.90 490.00 L1090.88 491.00 L1090.86 492.00 L1090.85 493.00 L1090.84 494.00 L1090.83 495.00 L1090.83 496.00 L1090.83 497.00 L1090.83 498.00 L1090.84 499.00 L1090.85 500.00 L1090.88 501.00 L1090.92 502.00 L1090.96 503.00 L1091.00 504.00 L1091.05 505.00 L1091.09 506.00 L1091.14 507.00 L1091.19 508.00 L1091.24 509.00 L1091.29 510.00 L1091.33 511.00 L1091.38 512.00 L1091.43 513.00 L1091.47 514.00 L1091.51 515.00 L1091.55 516.00 L1091.59 517.00 L1091.62 518.00 L1091.65 519.00 L1091.68 520.00 L1091.72 521.00 L1091.75 522.00 L1091.78 523.00 L1091.81 524.00 L1091.83 525.00 L1091.84 526.00 L1091.86 527.00 L1091.87 528.00 L1091.88 529.00 L1091.88 530.00 L1091.88 531.00 L1091.88 532.00 L1091.88 533.00 L1091.88 534.00 L1091.87 535.00 L1092.13 536.00 L1092.38 537.00 L1092.64 538.00 L1092.90 539.00 L1092.90 540.00 L1092.64 541.00 L1092.39 542.00 L1092.13 543.00 L1092.03 544.00 L1092.07 545.00 L1092.12 546.00 L1092.17 547.00 L1092.22 548.00 L1092.28 549.00 L1092.34 550.00 L1092.40 551.00 L1092.47 552.00 L1092.54 553.00 L1092.61 554.00 L1092.69 555.00 L1092.77 556.00 L1092.86 557.00 L1092.94 558.00 L1093.04 559.00 L1093.13 560.00 L1093.23 561.00 L1093.33 562.00 L1093.44 563.00 L1093.55 564.00 L1093.65 565.00 L1093.76 566.00 L1093.87 567.00 L1093.97 568.00 L1094.08 569.00 L1094.18 570.00 L1094.28 571.00 L1094.38 572.00 L1094.48 573.00 L1094.57 574.00 L1094.67 575.00 L1094.75 576.00 L1094.84 577.00 L1094.92 578.00 L1095.00 579.00 L1095.04 580.00 L1095.08 581.00 L1095.12 582.00 L1095.15 583.00 L1095.18 584.00 L1095.21 585.00 L1095.23 586.00 L1095.25 587.00 L1095.26 588.00 L1095.28 589.00 L1095.29 590.00 L1095.30 591.00 L1095.32 592.00 L1095.33 593.00 L1095.33 594.00 L1095.34 595.00 L1095.35 596.00 L1095.37 597.00 L1095.38 598.00 L1095.39 599.00 L1095.41 600.00 L1095.42 601.00 L1095.44 602.00 L1095.46 603.00 L1095.48 604.00 L1095.51 605.00 L1095.54 606.00 L1095.57 607.00 L1095.61 608.00 L1095.65 609.00 L1095.70 610.00 L1095.75 611.00 L1095.80 612.00 L1095.85 613.00 L1095.91 614.00 L1095.97 615.00 L1096.04 616.00 L1096.10 617.00 L1096.17 618.00 L1096.24 619.00 L1096.31 620.00 L1096.39 621.00 L1096.46 622.00 L1096.53 623.00 L1096.60 624.00 L1096.68 625.00 L1096.75 626.00 L1096.82 627.00 L1096.88 628.00 L1096.91 629.00 L1096.93 630.00 L1096.95 631.00 L1096.97 632.00 L1096.98 633.00 L1096.99 634.00 L1104.19 634.00 L1104.18 633.00 L1104.17 632.00 L1104.15 631.00 L1104.13 630.00 L1104.11 629.00 L1104.08 628.00 L1104.10 627.00 L1104.11 626.00 L1104.12 625.00 L1104.12 624.00 L1104.13 623.00 L1104.14 622.00 L1104.15 621.00 L1104.15 620.00 L1104.16 619.00 L1104.17 618.00 L1104.18 617.00 L1104.19 616.00 L1104.21 615.00 L1104.22 614.00 L1104.24 613.00 L1104.26 612.00 L1104.29 611.00 L1104.32 610.00 L1104.35 609.00 L1104.39 608.00 L1104.43 607.00 L1104.47 606.00 L1104.52 605.00 L1104.57 604.00 L1104.63 603.00 L1104.68 602.00 L1104.75 601.00 L1104.81 600.00 L1104.88 599.00 L1104.95 598.00 L1105.02 597.00 L1105.10 596.00 L1105.17 595.00 L1105.25 594.00 L1105.33 593.00 L1105.40 592.00 L1105.48 591.00 L1105.55 590.00 L1105.62 589.00 L1105.69 588.00 L1105.76 587.00 L1105.83 586.00 L1105.89 585.00 L1105.95 584.00 L1106.01 583.00 L1106.06 582.00 L1106.11 581.00 L1106.16 580.00 L1106.20 579.00 L1106.27 578.00 L1106.33 577.00 L1106.40 576.00 L1106.46 575.00 L1106.51 574.00 L1106.56 573.00 L1106.61 572.00 L1106.66 571.00 L1106.71 570.00 L1106.75 569.00 L1106.79 568.00 L1106.83 567.00 L1106.87 566.00 L1106.92 565.00 L1106.96 564.00 L1107.00 563.00 L1107.04 562.00 L1107.08 561.00 L1107.13 560.00 L1107.17 559.00 L1107.21 558.00 L1107.26 557.00 L1107.31 556.00 L1107.36 555.00 L1107.41 554.00 L1107.47 553.00 L1107.53 552.00 L1107.60 551.00 L1107.67 550.00 L1107.74 549.00 L1107.82 548.00 L1107.90 547.00 L1107.98 546.00 L1108.07 545.00 L1108.16 544.00 L1108.11 543.00 L1107.91 542.00 L1107.71 541.00 L1107.52 540.00 L1107.59 539.00 L1107.91 538.00 L1108.23 537.00 L1108.55 536.00 L1108.87 535.00 L1108.93 534.00 L1108.99 533.00 L1109.04 532.00 L1109.10 531.00 L1109.15 530.00 L1109.20 529.00 L1109.24 528.00 L1109.29 527.00 L1109.32 526.00 L1109.36 525.00 L1109.39 524.00 L1109.42 523.00 L1109.44 522.00 L1109.47 521.00 L1109.48 520.00 L1109.48 519.00 L1109.48 518.00 L1109.48 517.00 L1109.47 516.00 L1109.46 515.00 L1109.45 514.00 L1109.44 513.00 L1109.42 512.00 L1109.40 511.00 L1109.39 510.00 L1109.37 509.00 L1109.35 508.00 L1109.33 507.00 L1109.31 506.00 L1109.30 505.00 L1109.28 504.00 L1109.27 503.00 L1109.26 502.00 L1109.25 501.00 L1109.25 500.00 L1109.23 499.00 L1109.21 498.00 L1109.19 497.00 L1109.18 496.00 L1109.17 495.00 L1109.16 494.00 L1109.16 493.00 L1109.16 492.00 L1109.17 491.00 L1109.18 490.00 L1109.19 489.00 L1109.21 488.00 L1109.22 487.00 L1109.24 486.00 L1109.27 485.00 L1109.29 484.00 Z" fill="#1a3cd0" filter="url(#b1)" opacity=".85"/>
</g>
<path d="M1092.08 484.00 L1092.09 485.00 L1091.92 486.00 L1092.52 487.00 L1092.01 488.00 L1092.36 489.00 L1092.19 490.00 L1092.32 491.00 L1091.81 492.00 L1092.25 493.00 L1091.53 494.00 L1091.67 495.00 L1092.37 496.00 L1091.44 497.00 L1091.46 498.00 L1091.94 499.00 L1092.00 500.00 L1091.99 501.00 L1092.20 502.00 L1091.87 503.00 L1092.36 504.00 L1092.31 505.00 L1091.78 506.00 L1092.83 507.00 L1092.29 508.00 L1092.55 509.00 L1092.55 510.00 L1092.75 511.00 L1092.73 512.00 L1092.90 513.00 L1093.07 514.00 L1092.89 515.00 L1092.86 516.00 L1092.35 517.00 L1092.31 518.00 L1092.40 519.00 L1092.87 520.00 L1093.07 521.00 L1093.14 522.00 L1093.38 523.00 L1092.55 524.00 L1092.88 525.00 L1092.53 526.00 L1093.45 527.00 L1092.92 528.00 L1093.43 529.00 L1093.21 530.00 L1093.17 531.00 L1093.55 532.00 L1092.81 533.00 L1092.65 534.00 L1092.62 535.00 L1092.81 536.00 L1093.99 537.00 L1094.08 538.00 L1093.58 539.00 L1094.40 540.00 L1093.93 541.00 L1093.29 542.00 L1092.80 543.00 L1093.66 544.00 L1093.74 545.00 L1093.53 546.00 L1093.05 547.00 L1093.39 548.00 L1093.63 549.00 L1093.82 550.00 L1093.45 551.00 L1093.45 552.00 L1093.83 553.00 L1093.90 554.00 L1093.91 555.00 L1093.47 556.00 L1094.04 557.00 L1093.77 558.00 L1093.82 559.00 L1094.15 560.00 L1094.11 561.00 L1093.98 562.00 L1094.72 563.00 L1095.16 564.00 L1095.00 565.00 L1095.33 566.00 L1095.20 567.00 L1095.47 568.00 L1094.80 569.00 L1095.72 570.00 L1095.71 571.00 L1095.45 572.00 L1095.30 573.00 L1096.15 574.00 L1095.84 575.00 L1095.87 576.00 L1095.29 577.00 L1095.93 578.00 L1097.07 579.00 L1095.05 580.00 L1096.81 581.00 L1096.90 582.00 L1096.50 583.00 L1095.53 584.00 L1097.22 585.00 L1096.52 586.00 L1096.37 587.00 L1095.71 588.00 L1096.95 589.00 L1097.56 590.00 L1096.99 591.00 L1095.63 592.00 L1097.13 593.00 L1096.24 594.00 L1095.55 595.00 L1095.87 596.00 L1097.39 597.00 L1096.22 598.00 L1097.01 599.00 L1096.09 600.00 L1095.75 601.00 L1096.55 602.00 L1097.14 603.00 L1095.55 604.00 L1096.88 605.00 L1097.58 606.00 L1097.33 607.00 L1095.59 608.00 L1096.31 609.00 L1095.98 610.00 L1095.85 611.00 L1097.98 612.00 L1097.62 613.00 L1096.06 614.00 L1096.23 615.00 L1096.22 616.00 L1098.20 617.00 L1097.45 618.00 L1096.65 619.00 L1098.08 620.00 L1097.25 621.00 L1098.06 622.00 L1096.58 623.00 L1096.72 624.00 L1098.40 625.00 L1097.57 626.00 L1098.60 627.00 L1098.40 628.00 L1098.84 629.00 L1098.17 630.00 L1097.47 631.00 L1099.03 632.00 L1098.03 633.00 L1098.80 634.00 L1103.45 634.00 L1102.37 633.00 L1103.95 632.00 L1102.06 631.00 L1103.19 630.00 L1102.41 629.00 L1101.95 628.00 L1102.81 627.00 L1102.87 626.00 L1103.78 625.00 L1103.55 624.00 L1101.82 623.00 L1103.12 622.00 L1102.19 621.00 L1102.01 620.00 L1102.13 619.00 L1101.87 618.00 L1103.59 617.00 L1102.54 616.00 L1103.24 615.00 L1103.75 614.00 L1103.89 613.00 L1102.77 612.00 L1104.27 611.00 L1102.82 610.00 L1103.38 609.00 L1102.12 608.00 L1103.43 607.00 L1103.72 606.00 L1104.01 605.00 L1102.43 604.00 L1103.81 603.00 L1103.17 602.00 L1104.60 601.00 L1103.71 600.00 L1102.54 599.00 L1103.05 598.00 L1104.28 597.00 L1103.16 596.00 L1104.58 595.00 L1104.90 594.00 L1103.39 593.00 L1104.30 592.00 L1103.55 591.00 L1104.18 590.00 L1104.13 589.00 L1105.62 588.00 L1104.47 587.00 L1104.70 586.00 L1105.08 585.00 L1105.96 584.00 L1104.04 583.00 L1104.65 582.00 L1104.33 581.00 L1104.84 580.00 L1105.67 579.00 L1105.93 578.00 L1106.21 577.00 L1105.56 576.00 L1104.92 575.00 L1105.31 574.00 L1105.15 573.00 L1105.24 572.00 L1104.99 571.00 L1105.47 570.00 L1105.53 569.00 L1105.59 568.00 L1105.94 567.00 L1105.58 566.00 L1105.47 565.00 L1106.33 564.00 L1105.32 563.00 L1106.36 562.00 L1106.24 561.00 L1105.84 560.00 L1105.55 559.00 L1105.68 558.00 L1106.56 557.00 L1106.59 556.00 L1106.55 555.00 L1106.13 554.00 L1106.20 553.00 L1106.35 552.00 L1106.39 551.00 L1106.79 550.00 L1106.05 549.00 L1106.23 548.00 L1107.04 547.00 L1106.85 546.00 L1107.38 545.00 L1107.07 544.00 L1107.44 543.00 L1106.40 542.00 L1106.27 541.00 L1106.76 540.00 L1106.44 539.00 L1106.31 538.00 L1106.88 537.00 L1107.63 536.00 L1107.88 535.00 L1108.22 534.00 L1107.82 533.00 L1107.75 532.00 L1107.43 531.00 L1108.54 530.00 L1108.43 529.00 L1108.21 528.00 L1108.08 527.00 L1107.93 526.00 L1107.89 525.00 L1108.31 524.00 L1107.95 523.00 L1108.41 522.00 L1107.80 521.00 L1107.87 520.00 L1108.19 519.00 L1108.33 518.00 L1108.05 517.00 L1108.63 516.00 L1108.40 515.00 L1108.64 514.00 L1107.97 513.00 L1108.28 512.00 L1108.62 511.00 L1108.26 510.00 L1107.74 509.00 L1108.24 508.00 L1108.05 507.00 L1108.26 506.00 L1108.38 505.00 L1107.65 504.00 L1108.65 503.00 L1108.43 502.00 L1108.09 501.00 L1108.14 500.00 L1108.38 499.00 L1108.38 498.00 L1107.65 497.00 L1108.46 496.00 L1107.79 495.00 L1108.30 494.00 L1107.64 493.00 L1107.82 492.00 L1107.97 491.00 L1108.33 490.00 L1107.92 489.00 L1108.58 488.00 L1108.44 487.00 L1107.56 486.00 L1108.52 485.00 L1108.47 484.00 Z" fill="#f4e2a0" filter="url(#b05)"/>
<path d="M1093.23 484.00 L1092.71 485.00 L1092.98 486.00 L1092.99 487.00 L1093.52 488.00 L1093.48 489.00 L1093.10 490.00 L1092.77 491.00 L1092.90 492.00 L1093.13 493.00 L1092.88 494.00 L1093.28 495.00 L1093.07 496.00 L1092.76 497.00 L1093.32 498.00 L1093.11 499.00 L1092.78 500.00 L1093.06 501.00 L1092.52 502.00 L1093.51 503.00 L1092.63 504.00 L1092.78 505.00 L1092.78 506.00 L1093.11 507.00 L1093.75 508.00 L1093.72 509.00 L1093.65 510.00 L1093.82 511.00 L1093.81 512.00 L1093.07 513.00 L1093.17 514.00 L1093.52 515.00 L1093.71 516.00 L1093.30 517.00 L1093.65 518.00 L1093.52 519.00 L1094.00 520.00 L1093.62 521.00 L1093.96 522.00 L1094.01 523.00 L1094.10 524.00 L1093.61 525.00 L1094.11 526.00 L1093.91 527.00 L1094.07 528.00 L1094.32 529.00 L1094.16 530.00 L1094.21 531.00 L1094.27 532.00 L1094.46 533.00 L1093.87 534.00 L1093.82 535.00 L1093.89 536.00 L1094.22 537.00 L1094.25 538.00 L1094.56 539.00 L1094.83 540.00 L1095.04 541.00 L1094.71 542.00 L1094.64 543.00 L1093.71 544.00 L1094.40 545.00 L1094.09 546.00 L1094.35 547.00 L1094.41 548.00 L1094.76 549.00 L1093.94 550.00 L1094.15 551.00 L1094.45 552.00 L1094.29 553.00 L1094.92 554.00 L1094.94 555.00 L1094.78 556.00 L1095.45 557.00 L1094.56 558.00 L1095.34 559.00 L1094.93 560.00 L1095.45 561.00 L1095.11 562.00 L1095.07 563.00 L1095.90 564.00 L1095.28 565.00 L1095.40 566.00 L1096.21 567.00 L1096.27 568.00 L1096.36 569.00 L1096.34 570.00 L1096.16 571.00 L1096.52 572.00 L1096.40 573.00 L1097.16 574.00 L1097.04 575.00 L1096.85 576.00 L1096.00 577.00 L1097.71 578.00 L1097.32 579.00 L1096.26 580.00 L1096.76 581.00 L1098.12 582.00 L1097.54 583.00 L1097.70 584.00 L1096.96 585.00 L1097.67 586.00 L1097.33 587.00 L1097.08 588.00 L1096.68 589.00 L1096.53 590.00 L1098.37 591.00 L1098.28 592.00 L1097.14 593.00 L1097.01 594.00 L1098.54 595.00 L1097.34 596.00 L1097.69 597.00 L1098.54 598.00 L1098.21 599.00 L1097.36 600.00 L1096.65 601.00 L1098.32 602.00 L1097.34 603.00 L1097.54 604.00 L1098.65 605.00 L1096.65 606.00 L1097.75 607.00 L1097.05 608.00 L1097.35 609.00 L1098.58 610.00 L1098.34 611.00 L1097.61 612.00 L1096.97 613.00 L1098.69 614.00 L1099.13 615.00 L1098.36 616.00 L1099.21 617.00 L1098.85 618.00 L1099.09 619.00 L1099.13 620.00 L1097.68 621.00 L1098.74 622.00 L1097.78 623.00 L1099.66 624.00 L1098.39 625.00 L1099.04 626.00 L1098.45 627.00 L1098.17 628.00 L1099.74 629.00 L1100.12 630.00 L1099.28 631.00 L1099.43 632.00 L1099.44 633.00 L1098.08 634.00 L1101.92 634.00 L1102.41 633.00 L1102.89 632.00 L1101.75 631.00 L1102.87 630.00 L1101.74 629.00 L1101.08 628.00 L1100.95 627.00 L1101.78 626.00 L1102.20 625.00 L1102.41 624.00 L1103.09 623.00 L1101.49 622.00 L1101.95 621.00 L1100.97 620.00 L1102.25 619.00 L1101.46 618.00 L1101.10 617.00 L1102.67 616.00 L1101.49 615.00 L1102.39 614.00 L1101.18 613.00 L1102.95 612.00 L1101.16 611.00 L1101.64 610.00 L1102.43 609.00 L1102.62 608.00 L1102.18 607.00 L1102.35 606.00 L1101.49 605.00 L1102.49 604.00 L1101.75 603.00 L1101.92 602.00 L1102.68 601.00 L1103.52 600.00 L1103.37 599.00 L1101.81 598.00 L1102.04 597.00 L1103.92 596.00 L1103.54 595.00 L1102.07 594.00 L1103.72 593.00 L1103.45 592.00 L1103.52 591.00 L1103.26 590.00 L1102.88 589.00 L1103.65 588.00 L1104.70 587.00 L1104.69 586.00 L1103.34 585.00 L1103.14 584.00 L1102.97 583.00 L1103.66 582.00 L1104.55 581.00 L1104.25 580.00 L1104.69 579.00 L1104.00 578.00 L1103.47 577.00 L1104.62 576.00 L1104.27 575.00 L1103.98 574.00 L1104.42 573.00 L1104.06 572.00 L1104.49 571.00 L1104.93 570.00 L1104.77 569.00 L1104.73 568.00 L1105.13 567.00 L1104.30 566.00 L1105.21 565.00 L1104.68 564.00 L1105.01 563.00 L1104.77 562.00 L1104.71 561.00 L1104.96 560.00 L1105.11 559.00 L1104.99 558.00 L1105.40 557.00 L1105.35 556.00 L1105.28 555.00 L1105.17 554.00 L1105.56 553.00 L1105.05 552.00 L1105.28 551.00 L1105.22 550.00 L1105.54 549.00 L1105.77 548.00 L1105.40 547.00 L1106.09 546.00 L1106.10 545.00 L1106.56 544.00 L1106.36 543.00 L1106.15 542.00 L1105.73 541.00 L1105.06 540.00 L1105.40 539.00 L1105.98 538.00 L1106.15 537.00 L1106.31 536.00 L1106.79 535.00 L1106.68 534.00 L1106.94 533.00 L1106.50 532.00 L1107.38 531.00 L1106.87 530.00 L1107.55 529.00 L1107.57 528.00 L1107.65 527.00 L1106.91 526.00 L1106.79 525.00 L1107.27 524.00 L1107.71 523.00 L1107.39 522.00 L1107.09 521.00 L1107.34 520.00 L1107.63 519.00 L1107.16 518.00 L1107.79 517.00 L1107.38 516.00 L1107.79 515.00 L1106.93 514.00 L1107.76 513.00 L1106.88 512.00 L1107.15 511.00 L1106.82 510.00 L1106.78 509.00 L1106.85 508.00 L1107.54 507.00 L1107.34 506.00 L1107.32 505.00 L1106.72 504.00 L1107.65 503.00 L1107.11 502.00 L1107.05 501.00 L1106.87 500.00 L1106.83 499.00 L1106.79 498.00 L1106.60 497.00 L1107.45 496.00 L1107.25 495.00 L1106.89 494.00 L1106.96 493.00 L1107.55 492.00 L1107.41 491.00 L1107.42 490.00 L1106.95 489.00 L1107.58 488.00 L1107.23 487.00 L1107.34 486.00 L1106.69 485.00 L1107.09 484.00 Z" fill="#e0621a"/>
<path d="M1093.66 484.00 L1094.04 485.00 L1094.04 486.00 L1094.06 487.00 L1093.61 488.00 L1094.13 489.00 L1093.77 490.00 L1093.74 491.00 L1093.53 492.00 L1093.86 493.00 L1093.81 494.00 L1093.67 495.00 L1093.75 496.00 L1093.44 497.00 L1093.38 498.00 L1093.66 499.00 L1093.36 500.00 L1093.86 501.00 L1094.12 502.00 L1093.72 503.00 L1093.62 504.00 L1093.74 505.00 L1093.82 506.00 L1094.43 507.00 L1093.93 508.00 L1094.35 509.00 L1093.87 510.00 L1093.90 511.00 L1094.07 512.00 L1094.15 513.00 L1094.54 514.00 L1094.49 515.00 L1094.18 516.00 L1094.39 517.00 L1094.23 518.00 L1094.81 519.00 L1094.34 520.00 L1094.30 521.00 L1094.49 522.00 L1094.28 523.00 L1094.38 524.00 L1094.89 525.00 L1094.66 526.00 L1094.62 527.00 L1094.68 528.00 L1094.57 529.00 L1094.59 530.00 L1094.68 531.00 L1094.73 532.00 L1094.78 533.00 L1094.44 534.00 L1094.71 535.00 L1095.34 536.00 L1095.16 537.00 L1095.24 538.00 L1095.64 539.00 L1095.65 540.00 L1095.69 541.00 L1095.41 542.00 L1095.10 543.00 L1094.53 544.00 L1095.19 545.00 L1095.14 546.00 L1095.11 547.00 L1095.12 548.00 L1094.91 549.00 L1095.23 550.00 L1095.54 551.00 L1095.09 552.00 L1095.45 553.00 L1095.15 554.00 L1095.54 555.00 L1095.94 556.00 L1095.97 557.00 L1095.47 558.00 L1096.06 559.00 L1095.92 560.00 L1095.98 561.00 L1096.25 562.00 L1096.73 563.00 L1096.74 564.00 L1096.39 565.00 L1096.49 566.00 L1096.97 567.00 L1097.18 568.00 L1096.62 569.00 L1097.36 570.00 L1096.91 571.00 L1097.52 572.00 L1097.77 573.00 L1097.84 574.00 L1097.72 575.00 L1097.99 576.00 L1098.34 577.00 L1097.70 578.00 L1097.80 579.00 L1098.00 580.00 L1098.01 581.00 L1098.31 582.00 L1098.47 583.00 L1097.28 584.00 L1097.61 585.00 L1098.38 586.00 L1098.52 587.00 L1097.76 588.00 L1097.91 589.00 L1097.76 590.00 L1098.39 591.00 L1098.45 592.00 L1098.18 593.00 L1097.91 594.00 L1097.86 595.00 L1098.05 596.00 L1098.01 597.00 L1098.75 598.00 L1097.55 599.00 L1098.74 600.00 L1099.01 601.00 L1097.60 602.00 L1098.53 603.00 L1098.88 604.00 L1098.00 605.00 L1098.26 606.00 L1099.10 607.00 L1099.15 608.00 L1098.73 609.00 L1097.98 610.00 L1099.14 611.00 L1099.52 612.00 L1098.17 613.00 L1099.44 614.00 L1099.65 615.00 L1098.25 616.00 L1099.84 617.00 L1099.64 618.00 L1099.35 619.00 L1098.68 620.00 L1099.17 621.00 L1099.28 622.00 L1099.56 623.00 L1099.24 624.00 L1099.67 625.00 L1100.13 626.00 L1099.17 627.00 L1099.31 628.00 L1099.75 629.00 L1099.36 630.00 L1099.01 631.00 L1099.43 632.00 L1100.17 633.00 L1099.35 634.00 L1100.89 634.00 L1101.90 633.00 L1102.08 632.00 L1101.51 631.00 L1100.83 630.00 L1101.18 629.00 L1101.50 628.00 L1101.06 627.00 L1101.87 626.00 L1101.49 625.00 L1100.66 624.00 L1101.29 623.00 L1101.27 622.00 L1101.19 621.00 L1101.56 620.00 L1100.50 619.00 L1101.67 618.00 L1102.08 617.00 L1100.52 616.00 L1101.68 615.00 L1100.57 614.00 L1101.36 613.00 L1101.56 612.00 L1101.17 611.00 L1101.38 610.00 L1102.30 609.00 L1101.73 608.00 L1101.05 607.00 L1101.80 606.00 L1102.49 605.00 L1101.54 604.00 L1100.94 603.00 L1102.66 602.00 L1102.38 601.00 L1101.13 600.00 L1102.57 599.00 L1101.41 598.00 L1101.87 597.00 L1101.99 596.00 L1101.94 595.00 L1101.65 594.00 L1103.12 593.00 L1103.31 592.00 L1101.95 591.00 L1101.81 590.00 L1101.98 589.00 L1103.14 588.00 L1103.06 587.00 L1102.21 586.00 L1102.68 585.00 L1103.03 584.00 L1103.36 583.00 L1103.58 582.00 L1103.65 581.00 L1104.10 580.00 L1102.50 579.00 L1103.00 578.00 L1103.34 577.00 L1104.31 576.00 L1103.24 575.00 L1103.93 574.00 L1103.65 573.00 L1103.87 572.00 L1103.69 571.00 L1104.19 570.00 L1103.99 569.00 L1103.83 568.00 L1104.04 567.00 L1104.05 566.00 L1103.72 565.00 L1104.17 564.00 L1104.25 563.00 L1104.30 562.00 L1104.17 561.00 L1103.94 560.00 L1103.94 559.00 L1104.05 558.00 L1104.17 557.00 L1104.63 556.00 L1104.20 555.00 L1104.77 554.00 L1104.32 553.00 L1104.86 552.00 L1104.84 551.00 L1104.91 550.00 L1104.94 549.00 L1105.07 548.00 L1104.87 547.00 L1105.44 546.00 L1105.19 545.00 L1105.35 544.00 L1105.40 543.00 L1105.34 542.00 L1105.04 541.00 L1104.25 540.00 L1105.06 539.00 L1105.08 538.00 L1105.65 537.00 L1105.86 536.00 L1106.32 535.00 L1106.17 534.00 L1106.11 533.00 L1105.93 532.00 L1106.55 531.00 L1106.29 530.00 L1106.02 529.00 L1106.29 528.00 L1106.31 527.00 L1106.20 526.00 L1106.28 525.00 L1106.17 524.00 L1106.44 523.00 L1106.51 522.00 L1106.19 521.00 L1106.74 520.00 L1106.48 519.00 L1106.93 518.00 L1106.68 517.00 L1106.54 516.00 L1106.45 515.00 L1106.80 514.00 L1106.21 513.00 L1106.27 512.00 L1106.75 511.00 L1106.14 510.00 L1106.22 509.00 L1106.67 508.00 L1106.60 507.00 L1106.13 506.00 L1106.02 505.00 L1106.57 504.00 L1106.04 503.00 L1106.56 502.00 L1106.36 501.00 L1106.38 500.00 L1106.28 499.00 L1106.70 498.00 L1106.43 497.00 L1106.04 496.00 L1106.11 495.00 L1106.37 494.00 L1106.04 493.00 L1106.06 492.00 L1106.24 491.00 L1106.51 490.00 L1106.05 489.00 L1106.10 488.00 L1105.94 487.00 L1106.29 486.00 L1106.34 485.00 L1106.43 484.00 Z" fill="#b22a0a" filter="url(#b05)"/>
<path d="M1095.34 484.00 L1095.09 485.00 L1095.48 486.00 L1095.43 487.00 L1094.98 488.00 L1095.08 489.00 L1095.00 490.00 L1095.37 491.00 L1095.04 492.00 L1095.17 493.00 L1095.02 494.00 L1094.89 495.00 L1094.92 496.00 L1094.95 497.00 L1095.13 498.00 L1094.94 499.00 L1095.07 500.00 L1095.17 501.00 L1095.11 502.00 L1094.98 503.00 L1095.32 504.00 L1095.42 505.00 L1095.45 506.00 L1095.72 507.00 L1095.22 508.00 L1095.76 509.00 L1095.34 510.00 L1095.34 511.00 L1095.91 512.00 L1095.81 513.00 L1095.57 514.00 L1095.67 515.00 L1096.00 516.00 L1095.88 517.00 L1096.01 518.00 L1095.76 519.00 L1096.07 520.00 L1095.96 521.00 L1095.81 522.00 L1096.17 523.00 L1096.39 524.00 L1096.16 525.00 L1096.15 526.00 L1096.30 527.00 L1095.91 528.00 L1096.08 529.00 L1096.13 530.00 L1095.89 531.00 L1096.32 532.00 L1096.47 533.00 L1096.19 534.00 L1096.45 535.00 L1096.68 536.00 L1096.60 537.00 L1096.73 538.00 L1097.08 539.00 L1097.36 540.00 L1096.93 541.00 L1096.67 542.00 L1096.65 543.00 L1096.50 544.00 L1096.24 545.00 L1096.44 546.00 L1096.58 547.00 L1096.53 548.00 L1096.73 549.00 L1096.57 550.00 L1096.56 551.00 L1096.84 552.00 L1096.54 553.00 L1096.87 554.00 L1097.21 555.00 L1096.82 556.00 L1097.40 557.00 L1097.29 558.00 L1097.58 559.00 L1097.25 560.00 L1097.35 561.00 L1097.89 562.00 L1097.83 563.00 L1097.63 564.00 L1097.73 565.00 L1098.16 566.00 L1098.06 567.00 L1098.10 568.00 L1098.14 569.00 L1098.18 570.00 L1098.76 571.00 L1098.58 572.00 L1098.84 573.00 L1098.62 574.00 L1099.18 575.00 L1099.38 576.00 L1098.93 577.00 L1099.78 578.00 L1098.74 579.00 L1099.60 580.00 L1099.42 581.00 L1099.17 582.00 L1098.89 583.00 L1099.72 584.00 L1098.98 585.00 L1099.19 586.00 L1099.89 587.00 L1100.16 588.00 L1099.06 589.00 L1099.59 590.00 L1099.95 591.00 L1100.06 592.00 L1100.03 593.00 L1099.54 594.00 L1099.96 595.00 L1099.47 596.00 L1099.89 597.00 L1099.86 598.00 L1099.84 599.00 L1099.46 600.00 L1099.78 601.00 L1099.17 602.00 L1099.39 603.00 L1098.88 604.00 L1098.93 605.00 L1099.71 606.00 L1099.30 607.00 L1099.61 608.00 L1099.06 609.00 L1099.71 610.00 L1099.48 611.00 L1099.72 612.00 L1099.75 613.00 L1099.08 614.00 L1098.95 615.00 L1099.81 616.00 L1099.23 617.00 L1099.87 618.00 L1099.50 619.00 L1099.46 620.00 L1099.95 621.00 L1100.00 622.00 L1099.76 623.00 L1099.46 624.00 L1100.10 625.00 L1100.06 626.00 L1099.38 627.00 L1100.18 628.00 L1100.21 629.00 L1100.23 630.00 L1099.74 631.00 L1099.58 632.00 L1099.71 633.00 L1100.29 634.00 L1101.37 634.00 L1101.12 633.00 L1101.54 632.00 L1101.58 631.00 L1101.17 630.00 L1101.38 629.00 L1101.04 628.00 L1101.12 627.00 L1101.56 626.00 L1101.07 625.00 L1101.49 624.00 L1100.63 623.00 L1100.60 622.00 L1100.80 621.00 L1100.81 620.00 L1100.77 619.00 L1100.86 618.00 L1100.61 617.00 L1100.77 616.00 L1100.69 615.00 L1100.37 614.00 L1100.78 613.00 L1100.35 612.00 L1100.97 611.00 L1100.31 610.00 L1100.30 609.00 L1100.78 608.00 L1100.30 607.00 L1100.31 606.00 L1101.01 605.00 L1100.40 604.00 L1100.91 603.00 L1100.36 602.00 L1101.06 601.00 L1101.00 600.00 L1100.62 599.00 L1101.15 598.00 L1100.49 597.00 L1100.53 596.00 L1100.57 595.00 L1101.24 594.00 L1101.44 593.00 L1100.66 592.00 L1100.69 591.00 L1100.72 590.00 L1101.04 589.00 L1101.32 588.00 L1100.83 587.00 L1101.69 586.00 L1101.65 585.00 L1101.22 584.00 L1102.15 583.00 L1102.05 582.00 L1102.43 581.00 L1101.66 580.00 L1102.01 579.00 L1101.56 578.00 L1102.65 577.00 L1102.19 576.00 L1102.29 575.00 L1102.26 574.00 L1102.43 573.00 L1102.26 572.00 L1102.60 571.00 L1102.20 570.00 L1102.64 569.00 L1102.50 568.00 L1102.76 567.00 L1102.70 566.00 L1102.74 565.00 L1102.50 564.00 L1102.61 563.00 L1103.02 562.00 L1102.57 561.00 L1102.67 560.00 L1103.04 559.00 L1102.95 558.00 L1102.78 557.00 L1103.25 556.00 L1103.18 555.00 L1103.16 554.00 L1103.09 553.00 L1102.97 552.00 L1103.09 551.00 L1103.45 550.00 L1103.67 549.00 L1103.36 548.00 L1103.50 547.00 L1103.95 546.00 L1103.67 545.00 L1104.05 544.00 L1103.88 543.00 L1103.50 542.00 L1103.33 541.00 L1103.50 540.00 L1103.25 539.00 L1103.89 538.00 L1103.99 537.00 L1104.32 536.00 L1104.78 535.00 L1104.62 534.00 L1104.99 533.00 L1104.71 532.00 L1104.95 531.00 L1104.70 530.00 L1105.10 529.00 L1105.17 528.00 L1104.78 527.00 L1104.77 526.00 L1105.23 525.00 L1105.38 524.00 L1105.24 523.00 L1104.99 522.00 L1104.89 521.00 L1105.08 520.00 L1105.10 519.00 L1105.18 518.00 L1105.19 517.00 L1105.02 516.00 L1104.87 515.00 L1105.33 514.00 L1105.06 513.00 L1105.26 512.00 L1104.92 511.00 L1104.84 510.00 L1104.85 509.00 L1105.02 508.00 L1105.15 507.00 L1104.74 506.00 L1105.07 505.00 L1104.74 504.00 L1104.79 503.00 L1104.99 502.00 L1104.93 501.00 L1105.22 500.00 L1105.19 499.00 L1104.91 498.00 L1104.67 497.00 L1104.99 496.00 L1104.91 495.00 L1105.01 494.00 L1104.89 493.00 L1104.70 492.00 L1104.97 491.00 L1104.97 490.00 L1104.72 489.00 L1104.73 488.00 L1104.76 487.00 L1104.91 486.00 L1104.88 485.00 L1105.02 484.00 Z" fill="#7e0f05" filter="url(#b1)"/>
<rect x="1102.4" y="592.2" width="1" height="1" fill="#f8e8b0" opacity="0.79"/><rect x="1102.2" y="585.1" width="1" height="1" fill="#d04818" opacity="0.60"/><rect x="1097.3" y="617.7" width="1" height="1" fill="#f0c060" opacity="0.53"/><rect x="1099.2" y="607.1" width="1" height="1" fill="#e87828" opacity="0.53"/><rect x="1099.2" y="601.2" width="1" height="1" fill="#d04818" opacity="0.93"/><rect x="1098.1" y="605.8" width="1" height="1" fill="#e87828" opacity="0.51"/><rect x="1098.3" y="611.8" width="1" height="1" fill="#e87828" opacity="0.59"/><rect x="1100.6" y="615.4" width="1" height="1" fill="#e87828" opacity="0.90"/><rect x="1103.1" y="596.4" width="1" height="1" fill="#f8e8b0" opacity="0.71"/><rect x="1101.0" y="628.2" width="1" height="1" fill="#f8e8b0" opacity="0.87"/><rect x="1098.4" y="580.6" width="1" height="1" fill="#d04818" opacity="0.89"/><rect x="1098.3" y="578.2" width="1" height="1" fill="#d04818" opacity="0.60"/><rect x="1102.8" y="563.8" width="1" height="1" fill="#e87828" opacity="0.52"/><rect x="1099.5" y="616.5" width="1" height="1" fill="#d04818" opacity="0.89"/><rect x="1098.9" y="632.6" width="1" height="1" fill="#f0c060" opacity="0.86"/><rect x="1103.7" y="571.1" width="1" height="1" fill="#f8e8b0" opacity="0.91"/><rect x="1102.1" y="571.0" width="1" height="1" fill="#f0c060" opacity="0.84"/><rect x="1099.1" y="593.9" width="1" height="1" fill="#d04818" opacity="0.65"/><rect x="1100.8" y="627.1" width="1" height="1" fill="#e87828" opacity="0.94"/><rect x="1096.9" y="562.4" width="1" height="1" fill="#f0c060" opacity="0.52"/><rect x="1098.0" y="596.8" width="1" height="1" fill="#d04818" opacity="0.81"/><rect x="1097.3" y="613.2" width="1" height="1" fill="#e87828" opacity="0.53"/><rect x="1104.4" y="568.1" width="1" height="1" fill="#f8e8b0" opacity="0.74"/><rect x="1096.7" y="560.2" width="1" height="1" fill="#f8e8b0" opacity="0.78"/><rect x="1103.1" y="599.8" width="1" height="1" fill="#e87828" opacity="0.88"/><rect x="1097.9" y="629.9" width="1" height="1" fill="#f8e8b0" opacity="0.88"/><rect x="1098.6" y="631.0" width="1" height="1" fill="#f0c060" opacity="0.62"/><rect x="1097.6" y="572.9" width="1" height="1" fill="#f0c060" opacity="0.93"/><rect x="1095.7" y="574.3" width="1" height="1" fill="#e87828" opacity="0.62"/><rect x="1096.1" y="583.8" width="1" height="1" fill="#d04818" opacity="0.74"/><rect x="1101.1" y="600.1" width="1" height="1" fill="#e87828" opacity="0.68"/><rect x="1099.2" y="583.2" width="1" height="1" fill="#f8e8b0" opacity="0.67"/><rect x="1099.1" y="588.1" width="1" height="1" fill="#f8e8b0" opacity="0.90"/><rect x="1098.2" y="606.4" width="1" height="1" fill="#e87828" opacity="0.81"/><rect x="1102.5" y="613.3" width="1" height="1" fill="#f8e8b0" opacity="0.80"/><rect x="1101.0" y="566.3" width="1" height="1" fill="#f0c060" opacity="0.91"/><rect x="1101.9" y="563.6" width="1" height="1" fill="#e87828" opacity="0.81"/><rect x="1101.0" y="592.3" width="1" height="1" fill="#d04818" opacity="0.94"/><rect x="1102.6" y="560.1" width="1" height="1" fill="#d04818" opacity="0.73"/><rect x="1102.9" y="603.2" width="1" height="1" fill="#f8e8b0" opacity="0.87"/><rect x="1101.7" y="617.8" width="1" height="1" fill="#e87828" opacity="0.82"/><rect x="1100.0" y="588.7" width="1" height="1" fill="#e87828" opacity="0.53"/><rect x="1100.7" y="618.2" width="1" height="1" fill="#e87828" opacity="0.62"/><rect x="1101.6" y="621.4" width="1" height="1" fill="#e87828" opacity="0.73"/><rect x="1097.8" y="594.8" width="1" height="1" fill="#f8e8b0" opacity="0.53"/><rect x="1099.1" y="615.3" width="1" height="1" fill="#f8e8b0" opacity="0.74"/><rect x="1098.5" y="619.4" width="1" height="1" fill="#f8e8b0" opacity="0.57"/><rect x="1097.9" y="608.3" width="1" height="1" fill="#f0c060" opacity="0.64"/><rect x="1102.6" y="586.4" width="1" height="1" fill="#d04818" opacity="0.56"/><rect x="1097.4" y="571.2" width="1" height="1" fill="#f0c060" opacity="0.66"/><rect x="1099.9" y="608.4" width="1" height="1" fill="#e87828" opacity="0.70"/><rect x="1098.7" y="566.4" width="1" height="1" fill="#d04818" opacity="0.81"/><rect x="1099.6" y="592.8" width="1" height="1" fill="#f8e8b0" opacity="0.84"/><rect x="1101.5" y="570.9" width="1" height="1" fill="#e87828" opacity="0.72"/><rect x="1100.5" y="608.2" width="1" height="1" fill="#e87828" opacity="0.86"/><rect x="1100.3" y="578.5" width="1" height="1" fill="#f0c060" opacity="0.76"/><rect x="1096.4" y="564.2" width="1" height="1" fill="#e87828" opacity="0.91"/><rect x="1097.8" y="578.7" width="1" height="1" fill="#d04818" opacity="0.54"/><rect x="1102.0" y="606.4" width="1" height="1" fill="#f8e8b0" opacity="0.56"/><rect x="1098.9" y="630.0" width="1" height="1" fill="#e87828" opacity="0.91"/>
<ellipse cx="1100.7" cy="640.6" rx="15.5" ry="4.2" fill="#1236d8" filter="url(#b3)" opacity=".95"/>
<ellipse cx="1103.3" cy="645.4" rx="26" ry="1.6" fill="#0a1aa0" filter="url(#b3)" opacity=".45"/>
<path d="M1098.30 633.00 L1096.80 634.50 L1095.00 636.00 L1092.60 637.60 L1090.60 639.20 L1089.60 640.80 L1089.80 642.40 L1090.60 643.40 L1087.50 644.60 L1083.45 646.00 L1082.30 647.20 L1129.10 647.20 L1129.10 646.80 L1123.75 645.60 L1115.90 644.40 L1111.80 643.40 L1112.00 642.40 L1112.00 640.80 L1110.80 639.20 L1108.80 637.60 L1106.40 636.00 L1104.60 634.50 L1103.10 633.00 Z" fill="#f6e6a0" filter="url(#b05)"/>
<path d="M1098.30 633.00 L1098.10 634.50 L1096.30 636.00 L1093.90 637.60 L1091.90 639.20 L1090.90 640.80 L1091.10 642.40 L1091.90 643.40 L1088.80 644.60 L1085.40 646.00 L1084.90 647.20 L1126.50 647.20 L1126.50 646.80 L1121.80 645.60 L1114.60 644.40 L1110.50 643.40 L1110.70 642.40 L1110.70 640.80 L1109.50 639.20 L1107.50 637.60 L1105.10 636.00 L1103.30 634.50 L1103.10 633.00 Z" fill="#e2661a"/>
<path d="M1098.30 633.00 L1099.50 634.50 L1097.70 636.00 L1095.30 637.60 L1093.30 639.20 L1092.30 640.80 L1092.50 642.40 L1093.30 643.40 L1090.20 644.60 L1087.50 646.00 L1087.70 647.20 L1123.70 647.20 L1123.70 646.80 L1119.70 645.60 L1113.20 644.40 L1109.10 643.40 L1109.30 642.40 L1109.30 640.80 L1108.10 639.20 L1106.10 637.60 L1103.70 636.00 L1101.90 634.50 L1103.10 633.00 Z" fill="#9a1808" filter="url(#b05)"/>
<defs><linearGradient id="hl" gradientUnits="userSpaceOnUse" x1="738" y1="0" x2="1084" y2="0"><stop offset="0" stop-color="#1a2a90" stop-opacity=".3"/><stop offset=".02" stop-color="#70b0b0"/><stop offset=".035" stop-color="#d8d050"/><stop offset=".05" stop-color="#d03010"/><stop offset=".1" stop-color="#a01208"/><stop offset="1" stop-color="#9a1108"/></linearGradient><linearGradient id="hr" gradientUnits="userSpaceOnUse" x1="1127" y1="0" x2="1275" y2="0"><stop offset="0" stop-color="#8a1008"/><stop offset=".25" stop-color="#780e07"/><stop offset=".5" stop-color="#6a0c06"/><stop offset=".56" stop-color="#707018" stop-opacity=".9"/><stop offset=".7" stop-color="#5a7a28" stop-opacity=".8"/><stop offset=".85" stop-color="#3a3a60" stop-opacity=".7"/><stop offset="1" stop-color="#101050" stop-opacity=".2"/></linearGradient></defs>
<rect x="738" y="645.6" width="347" height="2.2" fill="url(#hl)"/>
<rect x="1084" y="646.0" width="44" height="1.9" fill="#8a1408"/>
<rect x="1127" y="645.8" width="148" height="1.9" fill="url(#hr)"/>
<rect x="1250.2" y="646.4" width="1.2" height="1" fill="#4868b0" opacity="0.42"/><rect x="1253.0" y="646.4" width="1.2" height="1" fill="#4868b0" opacity="0.72"/><rect x="1257.4" y="645.6" width="1.2" height="1" fill="#d8b030" opacity="0.59"/><rect x="1239.6" y="645.6" width="1.2" height="1" fill="#c04020" opacity="0.89"/><rect x="1260.6" y="646.4" width="1.2" height="1" fill="#c04020" opacity="0.43"/><rect x="1210.6" y="645.6" width="1.2" height="1" fill="#b8c040" opacity="0.78"/><rect x="1224.2" y="646.4" width="1.2" height="1" fill="#c04020" opacity="0.65"/><rect x="1264.4" y="645.6" width="1.2" height="1" fill="#b8c040" opacity="0.70"/><rect x="1230.6" y="646.4" width="1.2" height="1" fill="#4868b0" opacity="0.61"/><rect x="1231.5" y="646.4" width="1.2" height="1" fill="#b8c040" opacity="0.60"/><rect x="1205.4" y="645.6" width="1.2" height="1" fill="#b8c040" opacity="0.77"/><rect x="1225.9" y="646.4" width="1.2" height="1" fill="#b8c040" opacity="0.68"/><rect x="1254.2" y="645.6" width="1.2" height="1" fill="#4868b0" opacity="0.45"/><rect x="1260.3" y="645.6" width="1.2" height="1" fill="#c04020" opacity="0.45"/><rect x="1201.8" y="646.4" width="1.2" height="1" fill="#70a848" opacity="0.43"/><rect x="1247.4" y="646.4" width="1.2" height="1" fill="#d8b030" opacity="0.83"/><rect x="1237.4" y="645.6" width="1.2" height="1" fill="#4868b0" opacity="0.90"/><rect x="1257.9" y="646.4" width="1.2" height="1" fill="#70a848" opacity="0.57"/><rect x="1234.9" y="645.6" width="1.2" height="1" fill="#b8c040" opacity="0.89"/><rect x="1216.1" y="645.6" width="1.2" height="1" fill="#d8b030" opacity="0.56"/><rect x="1214.6" y="646.4" width="1.2" height="1" fill="#d8b030" opacity="0.66"/><rect x="1227.4" y="646.4" width="1.2" height="1" fill="#b8c040" opacity="0.55"/><rect x="1261.7" y="646.4" width="1.2" height="1" fill="#4868b0" opacity="0.55"/><rect x="1205.1" y="646.4" width="1.2" height="1" fill="#70a848" opacity="0.87"/><rect x="1245.5" y="645.6" width="1.2" height="1" fill="#c04020" opacity="0.58"/><rect x="1256.7" y="646.4" width="1.2" height="1" fill="#70a848" opacity="0.86"/><rect x="1237.8" y="646.4" width="1.2" height="1" fill="#b8c040" opacity="0.40"/><rect x="1200.2" y="646.4" width="1.2" height="1" fill="#c04020" opacity="0.42"/><rect x="1211.9" y="646.4" width="1.2" height="1" fill="#4868b0" opacity="0.50"/><rect x="1211.1" y="646.4" width="1.2" height="1" fill="#c04020" opacity="0.60"/><rect x="1251.0" y="645.6" width="1.2" height="1" fill="#70a848" opacity="0.43"/><rect x="1228.4" y="645.6" width="1.2" height="1" fill="#b8c040" opacity="0.47"/><rect x="1262.8" y="646.4" width="1.2" height="1" fill="#c04020" opacity="0.49"/><rect x="1266.0" y="645.6" width="1.2" height="1" fill="#c04020" opacity="0.65"/><rect x="1246.9" y="645.6" width="1.2" height="1" fill="#d8b030" opacity="0.67"/><rect x="1207.2" y="645.6" width="1.2" height="1" fill="#70a848" opacity="0.63"/><rect x="1210.5" y="645.6" width="1.2" height="1" fill="#b8c040" opacity="0.61"/><rect x="1245.7" y="646.4" width="1.2" height="1" fill="#d8b030" opacity="0.74"/><rect x="1206.9" y="645.6" width="1.2" height="1" fill="#b8c040" opacity="0.42"/><rect x="1259.4" y="645.6" width="1.2" height="1" fill="#d8b030" opacity="0.84"/><rect x="1256.4" y="645.6" width="1.2" height="1" fill="#c04020" opacity="0.55"/><rect x="1214.9" y="645.6" width="1.2" height="1" fill="#c04020" opacity="0.48"/><rect x="1256.6" y="646.4" width="1.2" height="1" fill="#70a848" opacity="0.89"/><rect x="1220.2" y="646.4" width="1.2" height="1" fill="#70a848" opacity="0.51"/><rect x="1237.0" y="645.6" width="1.2" height="1" fill="#b8c040" opacity="0.63"/><rect x="1251.1" y="646.4" width="1.2" height="1" fill="#4868b0" opacity="0.74"/>
</g>
<rect x="1315" y="495" width="8.8" height="300" fill="url(#cbar)"/>
</svg>
<div class="" style="position:absolute;left:224.20px;top:814.70px;width:364.40px;height:85.10px;background:#000;"></div>
<div class="" style="position:absolute;left:282.30px;top:814.70px;width:245.70px;height:85.10px;background:#363636;"></div>
<svg width="1387" height="909" viewBox="0 0 1387 909">
<line x1="248.4" y1="840.60" x2="563.6" y2="840.60" stroke="#9a9a9a" stroke-width="1" stroke-dasharray="2.4 1" shape-rendering="crispEdges"/><line x1="248.4" y1="849.10" x2="563.6" y2="849.10" stroke="#9a9a9a" stroke-width="1" stroke-dasharray="2.4 1" shape-rendering="crispEdges"/><line x1="248.4" y1="857.60" x2="563.6" y2="857.60" stroke="#9a9a9a" stroke-width="1" stroke-dasharray="2.4 1" shape-rendering="crispEdges"/><line x1="248.4" y1="866.10" x2="563.6" y2="866.10" stroke="#9a9a9a" stroke-width="1" stroke-dasharray="2.4 1" shape-rendering="crispEdges"/>
<rect x="267.10" y="840.6" width="1" height="34" fill="#707070"/>
<rect x="336.20" y="840.6" width="1" height="34" fill="#707070"/>
<rect x="405.30" y="840.6" width="1" height="34" fill="#707070"/>
<rect x="474.40" y="840.6" width="1" height="34" fill="#707070"/>
<rect x="543.50" y="840.6" width="1" height="34" fill="#707070"/>
<rect x="247.8" y="840.6" width="1.2" height="34.6" fill="#b8b8b8"/>
<rect x="247.8" y="874.0" width="315.8" height="1.2" fill="#b8b8b8"/>
<rect x="404.5" y="814.7" width="2.6" height="85.1" fill="#a82430" opacity=".8"/>
<path d="M516.0 874 L516.0 856.5 L516.6 855 L516.6 839.8 L517.4 839.8 L517.4 855 L518.6 856.5 L519.2 874 Z" fill="#7fa6cf"/>
<path d="M516.0 874 L516.0 856.5 L516.7 855 L516.7 839.8 L517.5 839.8 L517.5 855 L518.7 856.5 L519.2 874" stroke="#f4f4f4" stroke-width=".9" fill="none"/>
</svg>
<span class="t m " style="left:249.30px;top:822.00px;font-size:10.8px;line-height:12px;color:#f2f2f2;transform:scaleX(1.0045);">IF Spectrum</span>
<span class="t " style="left:240.51px;top:835.00px;font-size:9.9px;line-height:11px;color:#d8d8d8;transform:scaleX(0.9980);">0</span>
<span class="t " style="left:231.69px;top:844.00px;font-size:9.9px;line-height:11px;color:#d8d8d8;transform:scaleX(0.9980);">-10</span>
<span class="t " style="left:231.69px;top:852.00px;font-size:9.9px;line-height:11px;color:#d8d8d8;transform:scaleX(0.9980);">-20</span>
<span class="t " style="left:231.69px;top:861.00px;font-size:9.9px;line-height:11px;color:#d8d8d8;transform:scaleX(0.9980);">-30</span>
<span class="t " style="left:231.69px;top:869.00px;font-size:9.9px;line-height:11px;color:#d8d8d8;transform:scaleX(0.9980);">-40</span>
<span class="t " style="left:247.10px;top:883.00px;font-size:9.3px;line-height:10px;color:#c8c8c8;transform:scaleX(0.9907);">156,786M</span>
<span class="t " style="left:316.20px;top:883.00px;font-size:9.3px;line-height:10px;color:#c8c8c8;transform:scaleX(0.9907);">156,793M</span>
<span class="t " style="left:385.30px;top:883.00px;font-size:9.3px;line-height:10px;color:#c8c8c8;transform:scaleX(0.9907);">156,800M</span>
<span class="t " style="left:454.40px;top:883.00px;font-size:9.3px;line-height:10px;color:#c8c8c8;transform:scaleX(0.9907);">156,807M</span>
<span class="t " style="left:523.50px;top:883.00px;font-size:9.3px;line-height:10px;color:#c8c8c8;transform:scaleX(0.9907);">156,814M</span>
<div class="" style="position:absolute;left:592.80px;top:814.70px;width:367.20px;height:85.10px;background:#000;"></div>
<svg width="1387" height="909" viewBox="0 0 1387 909">
<line x1="619.0" y1="840.50" x2="934.3" y2="840.50" stroke="#808080" stroke-width="1" stroke-dasharray="2.4 1" shape-rendering="crispEdges"/><line x1="619.0" y1="843.62" x2="934.3" y2="843.62" stroke="#808080" stroke-width="1" stroke-dasharray="2.4 1" shape-rendering="crispEdges"/><line x1="619.0" y1="846.74" x2="934.3" y2="846.74" stroke="#808080" stroke-width="1" stroke-dasharray="2.4 1" shape-rendering="crispEdges"/><line x1="619.0" y1="849.85" x2="934.3" y2="849.85" stroke="#808080" stroke-width="1" stroke-dasharray="2.4 1" shape-rendering="crispEdges"/><line x1="619.0" y1="852.97" x2="934.3" y2="852.97" stroke="#808080" stroke-width="1" stroke-dasharray="2.4 1" shape-rendering="crispEdges"/><line x1="619.0" y1="856.09" x2="934.3" y2="856.09" stroke="#808080" stroke-width="1" stroke-dasharray="2.4 1" shape-rendering="crispEdges"/><line x1="619.0" y1="859.21" x2="934.3" y2="859.21" stroke="#808080" stroke-width="1" stroke-dasharray="2.4 1" shape-rendering="crispEdges"/><line x1="619.0" y1="862.33" x2="934.3" y2="862.33" stroke="#808080" stroke-width="1" stroke-dasharray="2.4 1" shape-rendering="crispEdges"/><line x1="619.0" y1="865.44" x2="934.3" y2="865.44" stroke="#808080" stroke-width="1" stroke-dasharray="2.4 1" shape-rendering="crispEdges"/><line x1="619.0" y1="868.56" x2="934.3" y2="868.56" stroke="#808080" stroke-width="1" stroke-dasharray="2.4 1" shape-rendering="crispEdges"/><line x1="619.0" y1="871.68" x2="934.3" y2="871.68" stroke="#808080" stroke-width="1" stroke-dasharray="2.4 1" shape-rendering="crispEdges"/>
<rect x="678.80" y="840.5" width="1" height="34" fill="#707070"/>
<rect x="738.50" y="840.5" width="1" height="34" fill="#707070"/>
<rect x="798.30" y="840.5" width="1" height="34" fill="#707070"/>
<rect x="858.00" y="840.5" width="1" height="34" fill="#707070"/>
<rect x="917.80" y="840.5" width="1" height="34" fill="#707070"/>
<rect x="618.3" y="840.5" width="1.2" height="34.7" fill="#b8b8b8"/>
<rect x="618.3" y="874.0" width="316" height="1.2" fill="#b8b8b8"/>
</svg>
<span class="t m " style="left:620.90px;top:822.00px;font-size:10.8px;line-height:12px;color:#f2f2f2;transform:scaleX(0.9815);">FM MPX Spectrum</span>
<span class="t " style="left:611.11px;top:835.00px;font-size:9.9px;line-height:11px;color:#d8d8d8;transform:scaleX(0.9980);">0</span>
<span class="t " style="left:602.29px;top:838.00px;font-size:9.9px;line-height:11px;color:#d8d8d8;transform:scaleX(0.9980);">-10</span>
<span class="t " style="left:602.29px;top:841.00px;font-size:9.9px;line-height:11px;color:#d8d8d8;transform:scaleX(0.9980);">-20</span>
<span class="t " style="left:602.29px;top:844.00px;font-size:9.9px;line-height:11px;color:#d8d8d8;transform:scaleX(0.9980);">-30</span>
<span class="t " style="left:602.29px;top:847.00px;font-size:9.9px;line-height:11px;color:#d8d8d8;transform:scaleX(0.9980);">-40</span>
<span class="t " style="left:602.29px;top:851.00px;font-size:9.9px;line-height:11px;color:#d8d8d8;transform:scaleX(0.9980);">-50</span>
<span class="t " style="left:602.29px;top:854.00px;font-size:9.9px;line-height:11px;color:#d8d8d8;transform:scaleX(0.9980);">-60</span>
<span class="t " style="left:602.29px;top:857.00px;font-size:9.9px;line-height:11px;color:#d8d8d8;transform:scaleX(0.9980);">-70</span>
<span class="t " style="left:602.29px;top:860.00px;font-size:9.9px;line-height:11px;color:#d8d8d8;transform:scaleX(0.9980);">-80</span>
<span class="t " style="left:602.29px;top:863.00px;font-size:9.9px;line-height:11px;color:#d8d8d8;transform:scaleX(0.9980);">-90</span>
<span class="t " style="left:596.80px;top:866.00px;font-size:9.9px;line-height:11px;color:#d8d8d8;transform:scaleX(0.9980);">-100</span>
<span class="t " style="left:597.54px;top:869.00px;font-size:9.9px;line-height:11px;color:#d8d8d8;transform:scaleX(0.9980);">-110</span>
<span class="t " style="left:612.58px;top:883.00px;font-size:9.3px;line-height:10px;color:#c8c8c8;transform:scaleX(0.9980);">DC</span>
<span class="t " style="left:671.79px;top:883.00px;font-size:9.3px;line-height:10px;color:#c8c8c8;transform:scaleX(0.9980);">19k</span>
<span class="t " style="left:731.49px;top:883.00px;font-size:9.3px;line-height:10px;color:#c8c8c8;transform:scaleX(0.9980);">38k</span>
<span class="t " style="left:791.29px;top:883.00px;font-size:9.3px;line-height:10px;color:#c8c8c8;transform:scaleX(0.9980);">57k</span>
<span class="t " style="left:850.99px;top:883.00px;font-size:9.3px;line-height:10px;color:#c8c8c8;transform:scaleX(0.9980);">76k</span>
<span class="t " style="left:910.79px;top:883.00px;font-size:9.3px;line-height:10px;color:#c8c8c8;transform:scaleX(0.9980);">95k</span>
<div class="" style="position:absolute;left:963.30px;top:814.70px;width:369.10px;height:85.10px;background:#000;"></div>
<svg width="1387" height="909" viewBox="0 0 1387 909">
<defs><linearGradient id="au" x1="0" x2="0" y1="0" y2="1"><stop offset="0" stop-color="#5e97d4"/><stop offset="1" stop-color="#2f6fb6"/></linearGradient></defs>
<line x1="989.6" y1="840.50" x2="1307" y2="840.50" stroke="#808080" stroke-width="1" stroke-dasharray="2.4 1" shape-rendering="crispEdges"/><line x1="989.6" y1="843.62" x2="1307" y2="843.62" stroke="#808080" stroke-width="1" stroke-dasharray="2.4 1" shape-rendering="crispEdges"/><line x1="989.6" y1="846.74" x2="1307" y2="846.74" stroke="#808080" stroke-width="1" stroke-dasharray="2.4 1" shape-rendering="crispEdges"/><line x1="989.6" y1="849.85" x2="1307" y2="849.85" stroke="#808080" stroke-width="1" stroke-dasharray="2.4 1" shape-rendering="crispEdges"/><line x1="989.6" y1="852.97" x2="1307" y2="852.97" stroke="#808080" stroke-width="1" stroke-dasharray="2.4 1" shape-rendering="crispEdges"/><line x1="989.6" y1="856.09" x2="1307" y2="856.09" stroke="#808080" stroke-width="1" stroke-dasharray="2.4 1" shape-rendering="crispEdges"/><line x1="989.6" y1="859.21" x2="1307" y2="859.21" stroke="#808080" stroke-width="1" stroke-dasharray="2.4 1" shape-rendering="crispEdges"/><line x1="989.6" y1="862.33" x2="1307" y2="862.33" stroke="#808080" stroke-width="1" stroke-dasharray="2.4 1" shape-rendering="crispEdges"/><line x1="989.6" y1="865.44" x2="1307" y2="865.44" stroke="#808080" stroke-width="1" stroke-dasharray="2.4 1" shape-rendering="crispEdges"/><line x1="989.6" y1="868.56" x2="1307" y2="868.56" stroke="#808080" stroke-width="1" stroke-dasharray="2.4 1" shape-rendering="crispEdges"/><line x1="989.6" y1="871.68" x2="1307" y2="871.68" stroke="#808080" stroke-width="1" stroke-dasharray="2.4 1" shape-rendering="crispEdges"/>
<rect x="1089.10" y="840.5" width="1" height="34" fill="#707070"/>
<rect x="1188.10" y="840.5" width="1" height="34" fill="#707070"/>
<rect x="1287.20" y="840.5" width="1" height="34" fill="#707070"/>
<path d="M990 874.4 L990.0 841.00 L991.3 846.00 L992.6 858.00 L993.9 866.50 L995.2 869.27 L996.5 869.81 L997.8 869.48 L999.1 869.89 L1000.4 869.91 L1001.7 868.89 L1003.0 868.78 L1004.3 870.25 L1005.6 869.20 L1006.9 869.14 L1008.2 870.50 L1009.5 869.54 L1010.8 870.18 L1012.1 869.52 L1013.4 869.80 L1014.7 868.91 L1016.0 869.76 L1017.3 870.17 L1018.6 869.53 L1019.9 869.91 L1021.2 869.77 L1022.5 868.67 L1023.8 869.90 L1025.1 869.59 L1026.4 869.05 L1027.7 868.55 L1029.0 870.04 L1030.3 869.32 L1031.6 869.75 L1032.9 870.02 L1034.2 869.71 L1035.5 870.07 L1036.8 869.11 L1038.1 869.82 L1039.4 869.17 L1040.7 870.04 L1042.0 869.92 L1043.3 868.50 L1044.6 868.56 L1045.9 868.69 L1047.2 870.02 L1048.5 869.06 L1049.8 869.39 L1051.1 868.79 L1052.4 869.14 L1053.7 868.91 L1055.0 868.83 L1056.3 869.24 L1057.6 869.23 L1058.9 869.79 L1060.2 869.37 L1061.5 869.80 L1062.8 869.66 L1064.1 869.89 L1065.4 869.30 L1066.7 868.37 L1068.0 869.61 L1069.3 869.78 L1070.6 869.66 L1071.9 869.04 L1073.2 869.29 L1074.5 868.37 L1075.8 869.48 L1077.1 869.00 L1078.4 868.46 L1079.7 868.05 L1081.0 869.46 L1082.3 869.68 L1083.6 868.03 L1084.9 869.26 L1086.2 868.49 L1087.5 867.91 L1088.8 868.02 L1090.1 868.70 L1091.4 868.68 L1092.7 867.01 L1094.0 867.92 L1095.3 866.85 L1096.6 868.12 L1097.9 867.54 L1099.2 868.70 L1100.5 869.05 L1101.8 868.33 L1103.1 869.32 L1104.4 868.14 L1105.7 867.75 L1107.0 868.70 L1108.3 867.68 L1109.6 867.97 L1110.9 868.33 L1112.2 868.69 L1113.5 867.85 L1114.8 867.64 L1116.1 869.11 L1117.4 868.10 L1118.7 869.24 L1120.0 869.12 L1121.3 868.17 L1122.6 868.30 L1123.9 868.40 L1125.2 868.61 L1126.5 868.51 L1127.8 868.43 L1129.1 868.52 L1130.4 869.08 L1131.7 868.29 L1133.0 868.14 L1134.3 868.65 L1135.6 867.76 L1136.9 867.86 L1138.2 869.07 L1139.5 868.23 L1140.8 868.27 L1142.1 867.29 L1143.4 868.00 L1144.7 868.28 L1146.0 867.26 L1147.3 868.32 L1148.6 868.33 L1149.9 867.29 L1151.2 868.30 L1152.5 867.99 L1153.8 868.36 L1155.1 867.76 L1156.4 868.38 L1157.7 868.43 L1159.0 867.12 L1160.3 867.18 L1161.6 868.27 L1162.9 868.78 L1164.2 867.48 L1165.5 867.84 L1166.8 868.07 L1168.1 867.56 L1169.4 867.63 L1170.7 867.52 L1172.0 867.61 L1173.3 868.00 L1174.6 867.46 L1175.9 867.58 L1177.2 868.28 L1178.5 866.92 L1179.8 867.89 L1181.1 868.17 L1182.4 867.39 L1183.7 867.22 L1185.0 868.25 L1186.3 867.22 L1187.6 867.11 L1188.9 867.55 L1190.2 868.01 L1191.5 866.92 L1192.8 867.30 L1194.1 867.31 L1195.4 868.19 L1196.7 867.47 L1198.0 868.21 L1199.3 866.96 L1200.6 867.24 L1201.9 867.79 L1203.2 868.20 L1204.5 867.41 L1205.8 866.99 L1207.1 866.79 L1208.4 867.51 L1209.7 866.88 L1211.0 867.95 L1212.3 867.95 L1213.6 866.64 L1214.9 866.56 L1216.2 867.09 L1217.5 866.19 L1218.8 865.77 L1220.1 864.28 L1221.4 863.49 L1222.7 863.79 L1224.0 865.09 L1225.3 864.79 L1226.6 865.61 L1227.9 866.30 L1229.2 866.68 L1230.5 866.88 L1231.8 867.89 L1233.1 866.55 L1234.4 866.28 L1235.7 867.96 L1237.0 867.83 L1238.3 868.01 L1239.6 867.00 L1240.9 867.91 L1242.2 867.86 L1243.5 866.58 L1244.8 867.50 L1246.1 867.65 L1247.4 867.33 L1248.7 867.06 L1250.0 866.63 L1251.3 866.71 L1252.6 866.49 L1253.9 866.19 L1255.2 867.11 L1256.5 866.55 L1257.8 867.48 L1259.1 866.09 L1260.4 867.62 L1261.7 867.23 L1263.0 867.63 L1264.3 867.57 L1265.6 867.56 L1266.9 866.96 L1268.2 865.94 L1269.5 867.24 L1270.8 866.19 L1272.1 866.41 L1273.4 867.05 L1274.7 866.79 L1276.0 866.57 L1277.3 867.50 L1278.6 866.90 L1279.9 866.40 L1281.2 866.23 L1282.5 867.31 L1283.8 866.60 L1285.1 867.14 L1286.4 866.35 L1287.7 866.06 L1289.0 866.65 L1290.3 867.14 L1291.6 865.97 L1292.9 867.07 L1294.2 867.29 L1295.5 867.07 L1296.8 867.09 L1298.1 865.60 L1299.4 866.71 L1300.7 867.11 L1302.0 865.64 L1303.3 866.02 L1304.6 866.00 L1305.9 866.46 L1306.5 874.4 Z" fill="url(#au)"/>
<path d="M990.0 841.00 L991.3 846.00 L992.6 858.00 L993.9 866.50 L995.2 869.27 L996.5 869.81 L997.8 869.48 L999.1 869.89 L1000.4 869.91 L1001.7 868.89 L1003.0 868.78 L1004.3 870.25 L1005.6 869.20 L1006.9 869.14 L1008.2 870.50 L1009.5 869.54 L1010.8 870.18 L1012.1 869.52 L1013.4 869.80 L1014.7 868.91 L1016.0 869.76 L1017.3 870.17 L1018.6 869.53 L1019.9 869.91 L1021.2 869.77 L1022.5 868.67 L1023.8 869.90 L1025.1 869.59 L1026.4 869.05 L1027.7 868.55 L1029.0 870.04 L1030.3 869.32 L1031.6 869.75 L1032.9 870.02 L1034.2 869.71 L1035.5 870.07 L1036.8 869.11 L1038.1 869.82 L1039.4 869.17 L1040.7 870.04 L1042.0 869.92 L1043.3 868.50 L1044.6 868.56 L1045.9 868.69 L1047.2 870.02 L1048.5 869.06 L1049.8 869.39 L1051.1 868.79 L1052.4 869.14 L1053.7 868.91 L1055.0 868.83 L1056.3 869.24 L1057.6 869.23 L1058.9 869.79 L1060.2 869.37 L1061.5 869.80 L1062.8 869.66 L1064.1 869.89 L1065.4 869.30 L1066.7 868.37 L1068.0 869.61 L1069.3 869.78 L1070.6 869.66 L1071.9 869.04 L1073.2 869.29 L1074.5 868.37 L1075.8 869.48 L1077.1 869.00 L1078.4 868.46 L1079.7 868.05 L1081.0 869.46 L1082.3 869.68 L1083.6 868.03 L1084.9 869.26 L1086.2 868.49 L1087.5 867.91 L1088.8 868.02 L1090.1 868.70 L1091.4 868.68 L1092.7 867.01 L1094.0 867.92 L1095.3 866.85 L1096.6 868.12 L1097.9 867.54 L1099.2 868.70 L1100.5 869.05 L1101.8 868.33 L1103.1 869.32 L1104.4 868.14 L1105.7 867.75 L1107.0 868.70 L1108.3 867.68 L1109.6 867.97 L1110.9 868.33 L1112.2 868.69 L1113.5 867.85 L1114.8 867.64 L1116.1 869.11 L1117.4 868.10 L1118.7 869.24 L1120.0 869.12 L1121.3 868.17 L1122.6 868.30 L1123.9 868.40 L1125.2 868.61 L1126.5 868.51 L1127.8 868.43 L1129.1 868.52 L1130.4 869.08 L1131.7 868.29 L1133.0 868.14 L1134.3 868.65 L1135.6 867.76 L1136.9 867.86 L1138.2 869.07 L1139.5 868.23 L1140.8 868.27 L1142.1 867.29 L1143.4 868.00 L1144.7 868.28 L1146.0 867.26 L1147.3 868.32 L1148.6 868.33 L1149.9 867.29 L1151.2 868.30 L1152.5 867.99 L1153.8 868.36 L1155.1 867.76 L1156.4 868.38 L1157.7 868.43 L1159.0 867.12 L1160.3 867.18 L1161.6 868.27 L1162.9 868.78 L1164.2 867.48 L1165.5 867.84 L1166.8 868.07 L1168.1 867.56 L1169.4 867.63 L1170.7 867.52 L1172.0 867.61 L1173.3 868.00 L1174.6 867.46 L1175.9 867.58 L1177.2 868.28 L1178.5 866.92 L1179.8 867.89 L1181.1 868.17 L1182.4 867.39 L1183.7 867.22 L1185.0 868.25 L1186.3 867.22 L1187.6 867.11 L1188.9 867.55 L1190.2 868.01 L1191.5 866.92 L1192.8 867.30 L1194.1 867.31 L1195.4 868.19 L1196.7 867.47 L1198.0 868.21 L1199.3 866.96 L1200.6 867.24 L1201.9 867.79 L1203.2 868.20 L1204.5 867.41 L1205.8 866.99 L1207.1 866.79 L1208.4 867.51 L1209.7 866.88 L1211.0 867.95 L1212.3 867.95 L1213.6 866.64 L1214.9 866.56 L1216.2 867.09 L1217.5 866.19 L1218.8 865.77 L1220.1 864.28 L1221.4 863.49 L1222.7 863.79 L1224.0 865.09 L1225.3 864.79 L1226.6 865.61 L1227.9 866.30 L1229.2 866.68 L1230.5 866.88 L1231.8 867.89 L1233.1 866.55 L1234.4 866.28 L1235.7 867.96 L1237.0 867.83 L1238.3 868.01 L1239.6 867.00 L1240.9 867.91 L1242.2 867.86 L1243.5 866.58 L1244.8 867.50 L1246.1 867.65 L1247.4 867.33 L1248.7 867.06 L1250.0 866.63 L1251.3 866.71 L1252.6 866.49 L1253.9 866.19 L1255.2 867.11 L1256.5 866.55 L1257.8 867.48 L1259.1 866.09 L1260.4 867.62 L1261.7 867.23 L1263.0 867.63 L1264.3 867.57 L1265.6 867.56 L1266.9 866.96 L1268.2 865.94 L1269.5 867.24 L1270.8 866.19 L1272.1 866.41 L1273.4 867.05 L1274.7 866.79 L1276.0 866.57 L1277.3 867.50 L1278.6 866.90 L1279.9 866.40 L1281.2 866.23 L1282.5 867.31 L1283.8 866.60 L1285.1 867.14 L1286.4 866.35 L1287.7 866.06 L1289.0 866.65 L1290.3 867.14 L1291.6 865.97 L1292.9 867.07 L1294.2 867.29 L1295.5 867.07 L1296.8 867.09 L1298.1 865.60 L1299.4 866.71 L1300.7 867.11 L1302.0 865.64 L1303.3 866.02 L1304.6 866.00 L1305.9 866.46" stroke="#f0f4f8" stroke-width=".9" fill="none"/>
<rect x="988.9" y="840.5" width="1.2" height="34.7" fill="#b8b8b8"/>
<rect x="988.9" y="874.0" width="318.2" height="1.2" fill="#b8b8b8"/>
</svg>
<span class="t m " style="left:991.60px;top:822.00px;font-size:10.8px;line-height:12px;color:#f2f2f2;transform:scaleX(0.9821);">Audio Spectrum</span>
<span class="t " style="left:981.71px;top:835.00px;font-size:9.9px;line-height:11px;color:#d8d8d8;transform:scaleX(0.9980);">0</span>
<span class="t " style="left:972.89px;top:838.00px;font-size:9.9px;line-height:11px;color:#d8d8d8;transform:scaleX(0.9980);">-10</span>
<span class="t " style="left:972.89px;top:841.00px;font-size:9.9px;line-height:11px;color:#d8d8d8;transform:scaleX(0.9980);">-20</span>
<span class="t " style="left:972.89px;top:844.00px;font-size:9.9px;line-height:11px;color:#d8d8d8;transform:scaleX(0.9980);">-30</span>
<span class="t " style="left:972.89px;top:847.00px;font-size:9.9px;line-height:11px;color:#d8d8d8;transform:scaleX(0.9980);">-40</span>
<span class="t " style="left:972.89px;top:851.00px;font-size:9.9px;line-height:11px;color:#d8d8d8;transform:scaleX(0.9980);">-50</span>
<span class="t " style="left:972.89px;top:854.00px;font-size:9.9px;line-height:11px;color:#d8d8d8;transform:scaleX(0.9980);">-60</span>
<span class="t " style="left:972.89px;top:857.00px;font-size:9.9px;line-height:11px;color:#d8d8d8;transform:scaleX(0.9980);">-70</span>
<span class="t " style="left:972.89px;top:860.00px;font-size:9.9px;line-height:11px;color:#d8d8d8;transform:scaleX(0.9980);">-80</span>
<span class="t " style="left:972.89px;top:863.00px;font-size:9.9px;line-height:11px;color:#d8d8d8;transform:scaleX(0.9980);">-90</span>
<span class="t " style="left:967.40px;top:866.00px;font-size:9.9px;line-height:11px;color:#d8d8d8;transform:scaleX(0.9980);">-100</span>
<span class="t " style="left:968.14px;top:869.00px;font-size:9.9px;line-height:11px;color:#d8d8d8;transform:scaleX(0.9980);">-110</span>
<span class="t " style="left:983.28px;top:883.00px;font-size:9.3px;line-height:10px;color:#c8c8c8;transform:scaleX(0.9980);">DC</span>
<span class="t " style="left:1084.67px;top:883.00px;font-size:9.3px;line-height:10px;color:#c8c8c8;transform:scaleX(0.9980);">5k</span>
<span class="t " style="left:1181.09px;top:883.00px;font-size:9.3px;line-height:10px;color:#c8c8c8;transform:scaleX(0.9980);">10k</span>
<span class="t " style="left:1280.19px;top:883.00px;font-size:9.3px;line-height:10px;color:#c8c8c8;transform:scaleX(0.9980);">15k</span>
<span class="t " style="left:1343.60px;top:74.00px;font-size:10.3px;line-height:11px;color:#151515;transform:scaleX(0.9158);">Zoom</span>
<svg width="1387" height="909" viewBox="0 0 1387 909"><rect x="1352.3" y="96.2" width="3" height="171.8" rx="1.2" fill="#dedede" stroke="#bdbdbd" stroke-width=".7"/><rect x="1340.6" y="99.90" width="2.6" height="1" fill="#c8c8c8"/><rect x="1364.6" y="99.90" width="2.6" height="1" fill="#c8c8c8"/><rect x="1340.6" y="116.19" width="2.6" height="1" fill="#c8c8c8"/><rect x="1364.6" y="116.19" width="2.6" height="1" fill="#c8c8c8"/><rect x="1340.6" y="132.48" width="2.6" height="1" fill="#c8c8c8"/><rect x="1364.6" y="132.48" width="2.6" height="1" fill="#c8c8c8"/><rect x="1340.6" y="148.77" width="2.6" height="1" fill="#c8c8c8"/><rect x="1364.6" y="148.77" width="2.6" height="1" fill="#c8c8c8"/><rect x="1340.6" y="165.06" width="2.6" height="1" fill="#c8c8c8"/><rect x="1364.6" y="165.06" width="2.6" height="1" fill="#c8c8c8"/><rect x="1340.6" y="181.35" width="2.6" height="1" fill="#c8c8c8"/><rect x="1364.6" y="181.35" width="2.6" height="1" fill="#c8c8c8"/><rect x="1340.6" y="197.64" width="2.6" height="1" fill="#c8c8c8"/><rect x="1364.6" y="197.64" width="2.6" height="1" fill="#c8c8c8"/><rect x="1340.6" y="213.93" width="2.6" height="1" fill="#c8c8c8"/><rect x="1364.6" y="213.93" width="2.6" height="1" fill="#c8c8c8"/><rect x="1340.6" y="230.22" width="2.6" height="1" fill="#c8c8c8"/><rect x="1364.6" y="230.22" width="2.6" height="1" fill="#c8c8c8"/><rect x="1340.6" y="246.51" width="2.6" height="1" fill="#c8c8c8"/><rect x="1364.6" y="246.51" width="2.6" height="1" fill="#c8c8c8"/><rect x="1340.6" y="262.80" width="2.6" height="1" fill="#c8c8c8"/><rect x="1364.6" y="262.80" width="2.6" height="1" fill="#c8c8c8"/><rect x="1344.6" y="200.2" width="18.4" height="8.6" rx="1.8" fill="url(#thv)" stroke="#8f8f8f" stroke-width="1"/></svg>
<span class="t " style="left:1337.90px;top:280.00px;font-size:10.3px;line-height:11px;color:#151515;transform:scaleX(0.9298);">Contrast</span>
<svg width="1387" height="909" viewBox="0 0 1387 909"><rect x="1352.3" y="302.4" width="3" height="170.8" rx="1.2" fill="#dedede" stroke="#bdbdbd" stroke-width=".7"/><rect x="1340.6" y="306.20" width="2.6" height="1" fill="#c8c8c8"/><rect x="1364.6" y="306.20" width="2.6" height="1" fill="#c8c8c8"/><rect x="1340.6" y="326.54" width="2.6" height="1" fill="#c8c8c8"/><rect x="1364.6" y="326.54" width="2.6" height="1" fill="#c8c8c8"/><rect x="1340.6" y="346.88" width="2.6" height="1" fill="#c8c8c8"/><rect x="1364.6" y="346.88" width="2.6" height="1" fill="#c8c8c8"/><rect x="1340.6" y="367.22" width="2.6" height="1" fill="#c8c8c8"/><rect x="1364.6" y="367.22" width="2.6" height="1" fill="#c8c8c8"/><rect x="1340.6" y="387.56" width="2.6" height="1" fill="#c8c8c8"/><rect x="1364.6" y="387.56" width="2.6" height="1" fill="#c8c8c8"/><rect x="1340.6" y="407.90" width="2.6" height="1" fill="#c8c8c8"/><rect x="1364.6" y="407.90" width="2.6" height="1" fill="#c8c8c8"/><rect x="1340.6" y="428.24" width="2.6" height="1" fill="#c8c8c8"/><rect x="1364.6" y="428.24" width="2.6" height="1" fill="#c8c8c8"/><rect x="1340.6" y="448.58" width="2.6" height="1" fill="#c8c8c8"/><rect x="1364.6" y="448.58" width="2.6" height="1" fill="#c8c8c8"/><rect x="1340.6" y="468.92" width="2.6" height="1" fill="#c8c8c8"/><rect x="1364.6" y="468.92" width="2.6" height="1" fill="#c8c8c8"/><rect x="1344.6" y="384.0" width="18.4" height="8.2" rx="1.8" fill="url(#thv)" stroke="#8f8f8f" stroke-width="1"/></svg>
<span class="t " style="left:1341.80px;top:486.00px;font-size:10.3px;line-height:11px;color:#151515;transform:scaleX(0.8901);">Range</span>
<svg width="1387" height="909" viewBox="0 0 1387 909"><rect x="1352.3" y="508.4" width="3" height="168.6" rx="1.2" fill="#dedede" stroke="#bdbdbd" stroke-width=".7"/><rect x="1340.6" y="512.40" width="2.6" height="1" fill="#c8c8c8"/><rect x="1364.6" y="512.40" width="2.6" height="1" fill="#c8c8c8"/><rect x="1340.6" y="524.89" width="2.6" height="1" fill="#c8c8c8"/><rect x="1364.6" y="524.89" width="2.6" height="1" fill="#c8c8c8"/><rect x="1340.6" y="537.38" width="2.6" height="1" fill="#c8c8c8"/><rect x="1364.6" y="537.38" width="2.6" height="1" fill="#c8c8c8"/><rect x="1340.6" y="549.87" width="2.6" height="1" fill="#c8c8c8"/><rect x="1364.6" y="549.87" width="2.6" height="1" fill="#c8c8c8"/><rect x="1340.6" y="562.36" width="2.6" height="1" fill="#c8c8c8"/><rect x="1364.6" y="562.36" width="2.6" height="1" fill="#c8c8c8"/><rect x="1340.6" y="574.85" width="2.6" height="1" fill="#c8c8c8"/><rect x="1364.6" y="574.85" width="2.6" height="1" fill="#c8c8c8"/><rect x="1340.6" y="587.34" width="2.6" height="1" fill="#c8c8c8"/><rect x="1364.6" y="587.34" width="2.6" height="1" fill="#c8c8c8"/><rect x="1340.6" y="599.83" width="2.6" height="1" fill="#c8c8c8"/><rect x="1364.6" y="599.83" width="2.6" height="1" fill="#c8c8c8"/><rect x="1340.6" y="612.32" width="2.6" height="1" fill="#c8c8c8"/><rect x="1364.6" y="612.32" width="2.6" height="1" fill="#c8c8c8"/><rect x="1340.6" y="624.81" width="2.6" height="1" fill="#c8c8c8"/><rect x="1364.6" y="624.81" width="2.6" height="1" fill="#c8c8c8"/><rect x="1340.6" y="637.30" width="2.6" height="1" fill="#c8c8c8"/><rect x="1364.6" y="637.30" width="2.6" height="1" fill="#c8c8c8"/><rect x="1340.6" y="649.79" width="2.6" height="1" fill="#c8c8c8"/><rect x="1364.6" y="649.79" width="2.6" height="1" fill="#c8c8c8"/><rect x="1340.6" y="662.28" width="2.6" height="1" fill="#c8c8c8"/><rect x="1364.6" y="662.28" width="2.6" height="1" fill="#c8c8c8"/><rect x="1340.6" y="674.77" width="2.6" height="1" fill="#c8c8c8"/><rect x="1364.6" y="674.77" width="2.6" height="1" fill="#c8c8c8"/><rect x="1344.6" y="671.6" width="18.4" height="8.3" rx="1.8" fill="url(#thv)" stroke="#8f8f8f" stroke-width="1"/></svg>
<span class="t " style="left:1342.50px;top:693.00px;font-size:10.3px;line-height:11px;color:#151515;transform:scaleX(0.9452);">Offset</span>
<svg width="1387" height="909" viewBox="0 0 1387 909"><rect x="1352.3" y="717.0" width="3" height="170.0" rx="1.2" fill="#dedede" stroke="#bdbdbd" stroke-width=".7"/><rect x="1340.6" y="720.80" width="2.6" height="1" fill="#c8c8c8"/><rect x="1364.6" y="720.80" width="2.6" height="1" fill="#c8c8c8"/><rect x="1340.6" y="731.77" width="2.6" height="1" fill="#c8c8c8"/><rect x="1364.6" y="731.77" width="2.6" height="1" fill="#c8c8c8"/><rect x="1340.6" y="742.74" width="2.6" height="1" fill="#c8c8c8"/><rect x="1364.6" y="742.74" width="2.6" height="1" fill="#c8c8c8"/><rect x="1340.6" y="753.71" width="2.6" height="1" fill="#c8c8c8"/><rect x="1364.6" y="753.71" width="2.6" height="1" fill="#c8c8c8"/><rect x="1340.6" y="764.68" width="2.6" height="1" fill="#c8c8c8"/><rect x="1364.6" y="764.68" width="2.6" height="1" fill="#c8c8c8"/><rect x="1340.6" y="775.65" width="2.6" height="1" fill="#c8c8c8"/><rect x="1364.6" y="775.65" width="2.6" height="1" fill="#c8c8c8"/><rect x="1340.6" y="786.62" width="2.6" height="1" fill="#c8c8c8"/><rect x="1364.6" y="786.62" width="2.6" height="1" fill="#c8c8c8"/><rect x="1340.6" y="797.59" width="2.6" height="1" fill="#c8c8c8"/><rect x="1364.6" y="797.59" width="2.6" height="1" fill="#c8c8c8"/><rect x="1340.6" y="808.56" width="2.6" height="1" fill="#c8c8c8"/><rect x="1364.6" y="808.56" width="2.6" height="1" fill="#c8c8c8"/><rect x="1340.6" y="819.53" width="2.6" height="1" fill="#c8c8c8"/><rect x="1364.6" y="819.53" width="2.6" height="1" fill="#c8c8c8"/><rect x="1340.6" y="830.50" width="2.6" height="1" fill="#c8c8c8"/><rect x="1364.6" y="830.50" width="2.6" height="1" fill="#c8c8c8"/><rect x="1340.6" y="841.47" width="2.6" height="1" fill="#c8c8c8"/><rect x="1364.6" y="841.47" width="2.6" height="1" fill="#c8c8c8"/><rect x="1340.6" y="852.44" width="2.6" height="1" fill="#c8c8c8"/><rect x="1364.6" y="852.44" width="2.6" height="1" fill="#c8c8c8"/><rect x="1340.6" y="863.41" width="2.6" height="1" fill="#c8c8c8"/><rect x="1364.6" y="863.41" width="2.6" height="1" fill="#c8c8c8"/><rect x="1340.6" y="874.38" width="2.6" height="1" fill="#c8c8c8"/><rect x="1364.6" y="874.38" width="2.6" height="1" fill="#c8c8c8"/><rect x="1340.6" y="885.35" width="2.6" height="1" fill="#c8c8c8"/><rect x="1364.6" y="885.35" width="2.6" height="1" fill="#c8c8c8"/><rect x="1344.6" y="881.2" width="18.4" height="8.8" rx="1.8" fill="url(#thv)" stroke="#8f8f8f" stroke-width="1"/></svg>
<svg width="1387" height="909" viewBox="0 0 1387 909"><rect x="1382.5" y="897" width="1.6" height="1.6" fill="#b8b8b8"/><rect x="1382.5" y="901" width="1.6" height="1.6" fill="#b8b8b8"/><rect x="1382.5" y="905" width="1.6" height="1.6" fill="#b8b8b8"/><rect x="1378.5" y="901" width="1.6" height="1.6" fill="#b8b8b8"/><rect x="1378.5" y="905" width="1.6" height="1.6" fill="#b8b8b8"/><rect x="1374.5" y="905" width="1.6" height="1.6" fill="#b8b8b8"/></svg>
</body></html>
